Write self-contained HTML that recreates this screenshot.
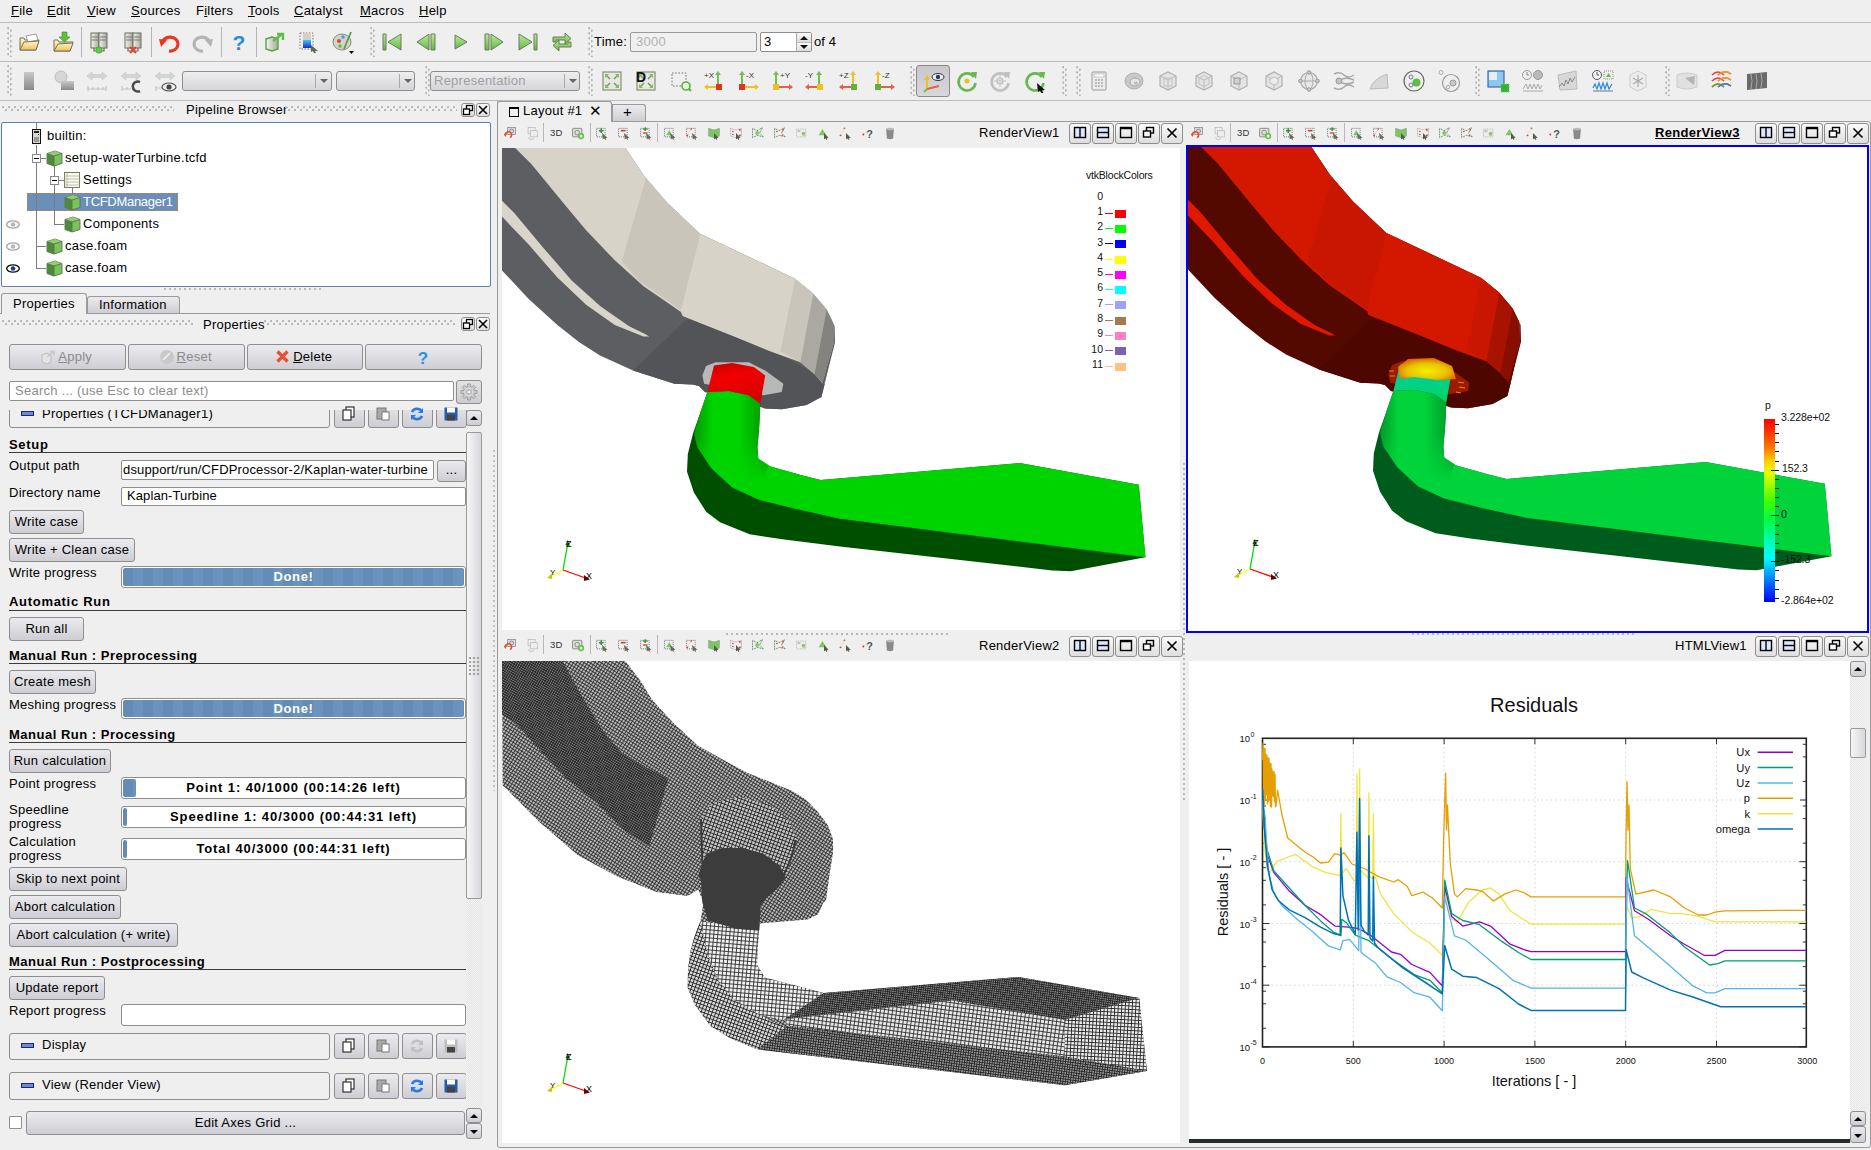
<!DOCTYPE html>
<html><head><meta charset="utf-8"><title>ParaView</title>
<style>
*{margin:0;padding:0;box-sizing:border-box}
html,body{width:1871px;height:1150px;overflow:hidden;background:#efefef;font-family:"Liberation Sans",sans-serif;font-size:13px;color:#000;position:relative}
.a{position:absolute}
.t{position:absolute;font-size:13px;line-height:15px;white-space:nowrap;letter-spacing:0.25px}
.b{font-weight:bold}
.hl{position:absolute;height:1px;background:#a0a0a0}
.vl{position:absolute;width:1px;background:#a0a0a0}
.btn{position:absolute;border:1px solid #8e8e8e;border-radius:3px;background:linear-gradient(#ebebef,#cdcdd3);}
.btnt{position:absolute;border:1px solid #8e8e8e;border-radius:3px;background:linear-gradient(#ebebef,#cdcdd3);text-align:center;font-size:13px;line-height:21px;white-space:nowrap;letter-spacing:0.25px}
.inp{position:absolute;border:1px solid #8e8e8e;border-radius:2px;background:#fff}
.grip{position:absolute;width:4px;background-image:radial-gradient(circle,#b9b9b9 0.8px,transparent 1px);background-size:3px 3px}
.griph{position:absolute;height:6px;background-image:radial-gradient(circle at 1.2px 1.2px,#b4b4b4 0.9px,transparent 1.2px),radial-gradient(circle at 4.2px 4.2px,#b4b4b4 0.9px,transparent 1.2px);background-size:6px 6px}
.prog{position:absolute;border:1px solid #8e8e8e;border-radius:3px;background:#fff;overflow:hidden}
.vbtn{position:absolute;width:22px;height:21px;border:1px solid #8e8e8e;border-radius:3px;background:linear-gradient(#fafafa,#dedede)}
.fill{position:absolute;left:1px;top:1px;bottom:1px;border-radius:2px;background:repeating-linear-gradient(90deg,#648bb4 0 10px,#6a93bd 10px 20px)}
.pt{position:absolute;left:0;right:0;top:2px;text-align:center;font-weight:bold;font-size:13px;line-height:15px;white-space:nowrap}
.sec{position:absolute;border:1px solid #8e8e8e;border-radius:3px;background:#efefef}
.sbtn{position:absolute;border:1px solid #8e8e8e;border-radius:3px;background:linear-gradient(#ebebef,#cdcdd3);width:31px}
.mini{position:absolute;width:13px;height:5px;background:#6f86d6;border:1px solid #1c2a70}

</style></head><body>
<!-- menu -->
<div class="t" style="left:11px;top:3px"><u>F</u>ile</div>
<div class="t" style="left:47px;top:3px"><u>E</u>dit</div>
<div class="t" style="left:87px;top:3px"><u>V</u>iew</div>
<div class="t" style="left:131px;top:3px"><u>S</u>ources</div>
<div class="t" style="left:196px;top:3px">F<u>i</u>lters</div>
<div class="t" style="left:248px;top:3px"><u>T</u>ools</div>
<div class="t" style="left:294px;top:3px"><u>C</u>atalyst</div>
<div class="t" style="left:360px;top:3px"><u>M</u>acros</div>
<div class="t" style="left:419px;top:3px"><u>H</u>elp</div>
<div class="hl" style="left:0;top:22px;width:1871px;background:#bdbdbd"></div>
<div class="hl" style="left:0;top:61px;width:1871px;background:#bdbdbd"></div>
<div class="hl" style="left:0;top:100px;width:1871px;background:#bdbdbd"></div>
<!-- pipeline browser -->
<div class="griph" style="left:2px;top:106px;width:172px"></div>
<div class="t" style="left:186px;top:102px">Pipeline Browser</div>
<div class="griph" style="left:285px;top:106px;width:172px"></div>
<div class="vbtn" style="left:461px;top:103px;width:14px;height:14px"></div>
<div class="vbtn" style="left:476px;top:103px;width:14px;height:14px"></div>
<div class="a" style="left:1px;top:122px;width:490px;height:165px;border:1px solid #5b80aa;border-radius:2px;background:#fff"></div>
<div class="a" style="left:27px;top:193px;width:151px;height:18px;background:#6a8fb8;border:1px dotted #c08040"></div>
<div class="t" style="left:47px;top:128px">builtin:</div>
<div class="t" style="left:65px;top:150px">setup-waterTurbine.tcfd</div>
<div class="t" style="left:83px;top:172px">Settings</div>
<div class="t" style="left:83px;top:194px;color:#fff;letter-spacing:-0.3px">TCFDManager1</div>
<div class="t" style="left:83px;top:216px">Components</div>
<div class="t" style="left:65px;top:238px">case.foam</div>
<div class="t" style="left:65px;top:260px">case.foam</div>
<!-- tabs -->
<div class="hl" style="left:0;top:313px;width:490px;background:#9a9a9a"></div>
<div class="a" style="left:1px;top:293px;width:86px;height:21px;border:1px solid #9a9a9a;border-bottom:none;border-radius:3px 3px 0 0;background:#efefef"></div>
<div class="a" style="left:87px;top:296px;width:93px;height:17px;border:1px solid #9a9a9a;border-bottom:none;border-radius:3px 3px 0 0;background:linear-gradient(#ebebef,#cdcdd3)"></div>
<div class="t" style="left:13px;top:296px">Properties</div>
<div class="t" style="left:99px;top:297px">Information</div>
<div class="griph" style="left:2px;top:320px;width:192px"></div>
<div class="t" style="left:203px;top:317px">Properties</div>
<div class="griph" style="left:264px;top:320px;width:192px"></div>
<div class="vbtn" style="left:461px;top:317px;width:14px;height:14px"></div>
<div class="vbtn" style="left:476px;top:317px;width:14px;height:14px"></div>
<!-- apply etc -->
<div class="btnt" style="left:9px;top:344px;width:117px;height:26px;line-height:24px;color:#8a8a8a">&nbsp;&nbsp;&nbsp;&nbsp;<u>A</u>pply</div>
<div class="btnt" style="left:128px;top:344px;width:117px;height:26px;line-height:24px;color:#8a8a8a">&nbsp;&nbsp;&nbsp;&nbsp;<u>R</u>eset</div>
<div class="btnt" style="left:247px;top:344px;width:116px;height:26px;line-height:24px">&nbsp;&nbsp;&nbsp;&nbsp;<u>D</u>elete</div>
<div class="btnt" style="left:365px;top:344px;width:117px;height:26px;line-height:24px"></div>
<div class="inp" style="left:9px;top:381px;width:445px;height:20px"></div>
<div class="t" style="left:15px;top:383px;color:#8c8c8c">Search ... (use Esc to clear text)</div>
<div class="btn" style="left:456px;top:380px;width:26px;height:24px;background:linear-gradient(#e2e2e4,#cdcdd1)"></div>
<div class="a" style="left:164px;top:288px;width:158px;height:3px;background-image:radial-gradient(circle at 1px 1px,#bdbdbd 0.8px,transparent 1px);background-size:5px 3px"></div>
<div class="a" style="left:0;top:0;width:490px;height:1150px;clip-path:inset(410px 0 11px 0)">
<div class="sec" style="left:9px;top:398px;width:321px;height:30px"></div>
<div class="mini" style="left:21px;top:411px"></div>
<div class="t" style="left:42px;top:406px">Properties (TCFDManager1)</div>
<div class="sbtn" style="left:334px;top:398px;height:30px"></div>
<div class="sbtn" style="left:368px;top:398px;height:30px"></div>
<div class="sbtn" style="left:402px;top:398px;height:30px"></div>
<div class="sbtn" style="left:436px;top:398px;height:30px"></div>

<div class="t b" style="left:9px;top:437px;letter-spacing:0.7px">Setup</div>
<div class="hl" style="left:9px;top:452px;width:457px;background:#3c3c3c"></div>
<div class="t" style="left:9px;top:458px">Output path</div>
<div class="inp" style="left:121px;top:460px;width:313px;height:20px;overflow:hidden"><div class="t" style="left:1px;top:1px;letter-spacing:0.15px">dsupport/run/CFDProcessor-2/Kaplan-water-turbine</div></div>
<div class="btnt" style="left:437px;top:460px;width:29px;height:22px;line-height:18px">...</div>
<div class="t" style="left:9px;top:485px">Directory name</div>
<div class="inp" style="left:121px;top:487px;width:345px;height:19px"><div class="t" style="left:5px;top:0px;letter-spacing:0.1px">Kaplan-Turbine</div></div>
<div class="btnt" style="left:9px;top:510px;width:75px;height:24px">Write case</div>
<div class="btnt" style="left:9px;top:538px;width:126px;height:24px">Write + Clean case</div>
<div class="t" style="left:9px;top:565px">Write progress</div>
<div class="prog" style="left:121px;top:566px;width:345px;height:22px"><div class="fill" style="right:1px"></div><div class="pt" style="color:#fff;top:2px;letter-spacing:0.6px">Done!</div></div>

<div class="t b" style="left:9px;top:594px;letter-spacing:0.7px">Automatic Run</div>
<div class="hl" style="left:9px;top:610px;width:457px;background:#3c3c3c"></div>
<div class="btnt" style="left:9px;top:617px;width:75px;height:24px">Run all</div>

<div class="t b" style="left:9px;top:648px;letter-spacing:0.5px">Manual Run : Preprocessing</div>
<div class="hl" style="left:9px;top:663px;width:457px;background:#3c3c3c"></div>
<div class="btnt" style="left:9px;top:670px;width:87px;height:24px">Create mesh</div>
<div class="t" style="left:9px;top:697px">Meshing progress</div>
<div class="prog" style="left:121px;top:698px;width:345px;height:21px"><div class="fill" style="right:1px"></div><div class="pt" style="color:#fff;top:2px;letter-spacing:0.6px">Done!</div></div>

<div class="t b" style="left:9px;top:727px;letter-spacing:0.5px">Manual Run : Processing</div>
<div class="hl" style="left:9px;top:742px;width:457px;background:#3c3c3c"></div>
<div class="btnt" style="left:9px;top:749px;width:102px;height:24px">Run calculation</div>
<div class="t" style="left:9px;top:776px">Point progress</div>
<div class="prog" style="left:121px;top:777px;width:345px;height:22px"><div class="fill" style="width:13px"></div><div class="pt" style="top:2px;letter-spacing:0.9px">Point 1: 40/1000 (00:14:26 left)</div></div>
<div class="t" style="left:9px;top:802px">Speedline</div>
<div class="t" style="left:9px;top:816px">progress</div>
<div class="prog" style="left:121px;top:806px;width:345px;height:22px"><div class="fill" style="width:4px"></div><div class="pt" style="top:2px;letter-spacing:0.9px">Speedline 1: 40/3000 (00:44:31 left)</div></div>
<div class="t" style="left:9px;top:834px">Calculation</div>
<div class="t" style="left:9px;top:848px">progress</div>
<div class="prog" style="left:121px;top:838px;width:345px;height:22px"><div class="fill" style="width:4px"></div><div class="pt" style="top:2px;letter-spacing:0.9px">Total 40/3000 (00:44:31 left)</div></div>
<div class="btnt" style="left:9px;top:867px;width:118px;height:24px">Skip to next point</div>
<div class="btnt" style="left:9px;top:895px;width:112px;height:24px">Abort calculation</div>
<div class="btnt" style="left:9px;top:923px;width:169px;height:24px">Abort calculation (+ write)</div>

<div class="t b" style="left:9px;top:954px;letter-spacing:0.5px">Manual Run : Postprocessing</div>
<div class="hl" style="left:9px;top:969px;width:457px;background:#3c3c3c"></div>
<div class="btnt" style="left:9px;top:976px;width:96px;height:24px">Update report</div>
<div class="t" style="left:9px;top:1003px">Report progress</div>
<div class="prog" style="left:121px;top:1004px;width:345px;height:22px"></div>

<div class="sec" style="left:9px;top:1033px;width:321px;height:27px"></div>
<div class="mini" style="left:21px;top:1043px"></div>
<div class="t" style="left:42px;top:1037px">Display</div>
<div class="sbtn" style="left:334px;top:1033px;height:26px"></div>
<div class="sbtn" style="left:368px;top:1033px;height:26px"></div>
<div class="sbtn" style="left:402px;top:1033px;height:26px"></div>
<div class="sbtn" style="left:436px;top:1033px;height:26px"></div>

<div class="sec" style="left:9px;top:1072px;width:321px;height:28px"></div>
<div class="mini" style="left:21px;top:1083px"></div>
<div class="t" style="left:42px;top:1077px">View (Render View)</div>
<div class="sbtn" style="left:334px;top:1073px;height:26px"></div>
<div class="sbtn" style="left:368px;top:1073px;height:26px"></div>
<div class="sbtn" style="left:402px;top:1073px;height:26px"></div>
<div class="sbtn" style="left:436px;top:1073px;height:26px"></div>

<div class="a" style="left:9px;top:1116px;width:13px;height:13px;border:1px solid #8e8e8e;background:#fff;border-radius:1px"></div>
<div class="btnt" style="left:26px;top:1111px;width:439px;height:24px">Edit Axes Grid ...</div>
</div>
<!-- scrollbar -->
<div class="a" style="left:466px;top:426px;width:16px;height:682px;background:repeating-conic-gradient(#e4e4e4 0 25%,#f4f4f4 0 50%) 0 0/2px 2px"></div>
<div class="a" style="left:466px;top:432px;width:16px;height:467px;border:1px solid #9a9a9a;border-radius:2px;background:linear-gradient(90deg,#f6f6f6,#d8d8dc)"></div>
<div class="btn" style="left:466px;top:410px;width:16px;height:16px"></div>
<div class="btn" style="left:466px;top:1108px;width:16px;height:15px"></div>
<div class="btn" style="left:466px;top:1123px;width:16px;height:16px"></div>
<div class="vl" style="left:497px;top:101px;height:1046px;background:#b0b0b0"></div>
<div class="a" style="left:493px;top:450px;width:3px;height:341px;background-image:radial-gradient(circle at 1px 1px,#c0c0c0 0.7px,transparent 1px);background-size:3px 5px"></div>
<div class="a" style="left:469px;top:657px;width:11px;height:18px;background-image:radial-gradient(circle at 1px 1px,#a0a0a0 0.8px,transparent 1px);background-size:4px 4px"></div>
<!-- tab widget -->
<div class="a" style="left:497px;top:121px;width:1374px;height:1027px;border:1px solid #9a9a9a;border-radius:0 3px 3px 3px;background:#efefef"></div>
<div class="a" style="left:497px;top:101px;width:115px;height:21px;border:1px solid #9a9a9a;border-bottom:none;border-radius:3px 3px 0 0;background:#efefef"></div>
<div class="a" style="left:612px;top:104px;width:34px;height:17px;border:1px solid #9a9a9a;border-bottom:none;border-radius:0 3px 0 0;background:linear-gradient(#ebebef,#cdcdd3)"></div>
<div class="a" style="left:509px;top:107px;width:10px;height:10px;border:1.5px solid #000;border-top-width:2.5px"></div>
<div class="t" style="left:523px;top:103px">Layout #1</div>
<div class="t" style="left:589px;top:103px;font-size:15px">&#x2715;</div>
<div class="t" style="left:623px;top:104px;font-size:15px">+</div>
<!-- view labels -->
<div class="t" style="left:979px;top:125px">RenderView1</div>
<div class="t b" style="left:1655px;top:125px;text-decoration:underline;letter-spacing:0.3px">RenderView3</div>
<div class="t" style="left:979px;top:638px">RenderView2</div>
<div class="t" style="left:1675px;top:638px">HTMLView1</div>
<!-- view contents -->
<div class="a" style="left:502px;top:148px;width:678px;height:482px;background:#fff;overflow:hidden" id="rv1"></div>
<div class="a" style="left:1186px;top:145px;width:683px;height:488px;border:2px solid #0000ff;background:#fff"></div>
<div class="a" style="left:502px;top:661px;width:678px;height:482px;background:#fff"></div>
<div class="a" style="left:1189px;top:661px;width:661px;height:482px;background:#fff"></div>
<div class="a" style="left:1189px;top:1139px;width:661px;height:4px;background:#252e2c"></div>
<!-- html scrollbar -->
<div class="a" style="left:1850px;top:661px;width:16px;height:482px;background:repeating-conic-gradient(#e4e4e4 0 25%,#f6f6f6 0 50%) 0 0/2px 2px"></div>
<div class="btn" style="left:1850px;top:661px;width:16px;height:16px"></div>
<div class="a" style="left:1850px;top:728px;width:16px;height:30px;border:1px solid #9a9a9a;border-radius:2px;background:linear-gradient(90deg,#f6f6f6,#d8d8dc)"></div>
<div class="btn" style="left:1850px;top:1111px;width:16px;height:15px"></div>
<div class="btn" style="left:1850px;top:1126px;width:16px;height:17px"></div>
<div class="vbtn" style="left:1069px;top:123px"></div>
<div class="vbtn" style="left:1092px;top:123px"></div>
<div class="vbtn" style="left:1115px;top:123px"></div>
<div class="vbtn" style="left:1138px;top:123px"></div>
<div class="vbtn" style="left:1161px;top:123px"></div>
<div class="vbtn" style="left:1755px;top:123px"></div>
<div class="vbtn" style="left:1778px;top:123px"></div>
<div class="vbtn" style="left:1801px;top:123px"></div>
<div class="vbtn" style="left:1824px;top:123px"></div>
<div class="vbtn" style="left:1847px;top:123px"></div>
<div class="vbtn" style="left:1069px;top:636px"></div>
<div class="vbtn" style="left:1092px;top:636px"></div>
<div class="vbtn" style="left:1115px;top:636px"></div>
<div class="vbtn" style="left:1138px;top:636px"></div>
<div class="vbtn" style="left:1161px;top:636px"></div>
<div class="vbtn" style="left:1755px;top:636px"></div>
<div class="vbtn" style="left:1778px;top:636px"></div>
<div class="vbtn" style="left:1801px;top:636px"></div>
<div class="vbtn" style="left:1824px;top:636px"></div>
<div class="vbtn" style="left:1847px;top:636px"></div><svg class="a" style="left:502px;top:148px" width="678" height="482" viewBox="502 148 678 482"><defs><linearGradient id="redg" x1="0" y1="0" x2="0.3" y2="1"><stop offset="0" stop-color="#c00000"/><stop offset="0.4" stop-color="#f20000"/><stop offset="1" stop-color="#d80000"/></linearGradient></defs><g transform="translate(0,0)"><polygon points="502.0,147.6 625.2,147.6 644.3,176.3 667.0,202.4 700.0,233.7 795.0,278.7 813.2,293.6 826.4,309.3 833.0,322.5 833.8,342.4 824.7,383.7 821.4,396.9 806.5,405.1 781.8,409.3 765.2,408.5 740.0,400.0 705.0,392.0 699.0,386.0 692.5,384.5 674.4,383.7 633.0,370.4 600.0,355.6 578.9,342.1 557.4,325.0 528.7,299.1 502.0,270.4" fill="#5c5e62"/><polygon points="686.0,320.0 692.5,320.0 732.2,335.7 781.8,355.6 814.8,373.8 821.4,383.7 824.7,383.7 821.4,396.9 806.5,405.1 781.8,409.3 765.2,408.5 740.0,400.0 705.0,392.0 699.0,386.0 692.5,384.5 674.4,383.7 633.0,370.4" fill="#525458"/><polygon points="514.8,147.6 625.2,147.6 644.3,176.3 667.0,202.4 700.0,233.7 795.0,278.7 813.2,293.6 826.4,309.3 833.0,322.5 833.8,342.4 824.7,383.7 822.4,383.0 814.4,373.9 800.4,362.3 770.0,351.3 732.2,335.7 692.5,320.0 682.6,315.9 680.9,312.0 660.0,297.6 643.5,286.2 614.8,260.3 586.1,230.2 564.6,204.4 544.5,180.0 531.3,164.1" fill="#d7d3c9"/><polygon points="646.0,178.0 667.0,202.4 700.0,233.7 700.0,235.4 680.9,310.2 639.1,280.7 621.7,261.5" fill="#c9c5bb"/><polygon points="795.0,278.9 813.2,294.1 800.4,362.3 780.4,351.3" fill="#c9c5bb"/><polygon points="813.2,294.1 826.6,309.3 814.4,373.9 800.4,362.3" fill="#aaa8a0"/><polygon points="826.6,309.3 833.3,323.3 833.9,342.8 822.4,383.0 814.4,373.9" fill="#84837f"/><polygon points="833.3,323.3 834.6,326.0 835.0,342.8 824.2,384.5 822.4,383.0 833.9,342.8" fill="#5c5c5a"/><polygon points="502.0,200.8 514.3,213.0 543.0,247.4 571.7,280.4 600.4,306.3 629.1,326.3 645.0,334.0 649.2,336.4 643.5,336.4 614.8,324.9 586.1,304.8 557.4,277.6 528.7,244.6 502.0,216.6" fill="#d9d5cb"/><polygon points="702.4,375.4 706.0,366.0 715.7,362.2 748.7,362.2 765.2,370.5 783.4,383.7 781.8,391.9 763.6,395.2 704.1,383.7" fill="#b8b8b8"/><polygon points="707.4,392.0 700.9,410.9 693.0,433.5 687.8,454.3 687.0,471.7 693.9,492.6 706.1,511.7 720.0,522.2 749.6,534.3 784.3,539.6 840.0,546.5 1052.4,570.4 1070.7,571.2 1145.4,557.3 1138.8,484.7 1019.7,463.0 820.6,480.0 801.7,475.2 770.4,466.5 758.3,458.7 757.4,447.4 759.1,428.3 760.3,403.5 748.7,395.2 728.9,391.1" fill="#004e00"/><polygon points="707.4,392.0 700.9,410.9 694.0,433.5 697.4,447.4 711.3,468.3 732.2,487.4 758.3,499.6 793.0,508.3 840.0,518.7 1145.4,557.3 1138.8,484.7 1019.7,463.0 820.6,480.0 801.7,475.2 770.4,466.5 758.3,458.7 757.4,447.4 759.1,428.3 760.3,403.5 748.7,395.2 728.9,391.1" fill="#00d400"/><defs><linearGradient id="tsh0" x1="0" y1="0" x2="1" y2="0"><stop offset="0" stop-color="#000" stop-opacity="0.28"/><stop offset="0.25" stop-color="#000" stop-opacity="0"/><stop offset="0.6" stop-color="#000" stop-opacity="0"/><stop offset="0.88" stop-color="#000" stop-opacity="0.22"/><stop offset="1" stop-color="#000" stop-opacity="0.4"/></linearGradient><linearGradient id="tmg0" gradientUnits="userSpaceOnUse" x1="0" y1="435" x2="0" y2="482"><stop offset="0" stop-color="#fff"/><stop offset="1" stop-color="#000"/></linearGradient><mask id="tmk0" maskUnits="userSpaceOnUse" x="600" y="350" width="300" height="200"><rect x="600" y="350" width="300" height="200" fill="url(#tmg0)"/></mask></defs><polygon points="707.4,392.0 700.9,410.9 694.0,433.5 697.4,447.4 711.3,468.3 732.2,487.4 758.3,499.6 768.0,466.0 758.3,458.7 757.4,447.4 759.1,428.3 760.3,403.5 748.7,395.2 728.9,391.1" fill="url(#tsh0)" mask="url(#tmk0)"/><polygon points="714.0,365.5 732.2,363.0 753.7,367.1 765.2,375.4 760.3,403.5 748.7,395.2 728.9,391.1 707.4,392.0" fill="url(#redg)"/></g></svg>
<svg class="a" style="left:1188px;top:147px" width="679" height="484" viewBox="1188 147 679 484"><g transform="translate(686,-1)"><polygon points="502.0,147.6 625.2,147.6 644.3,176.3 667.0,202.4 700.0,233.7 795.0,278.7 813.2,293.6 826.4,309.3 833.0,322.5 833.8,342.4 824.7,383.7 821.4,396.9 806.5,405.1 781.8,409.3 765.2,408.5 740.0,400.0 705.0,392.0 699.0,386.0 692.5,384.5 674.4,383.7 633.0,370.4 600.0,355.6 578.9,342.1 557.4,325.0 528.7,299.1 502.0,270.4" fill="#530800"/><polygon points="686.0,320.0 692.5,320.0 732.2,335.7 781.8,355.6 814.8,373.8 821.4,383.7 824.7,383.7 821.4,396.9 806.5,405.1 781.8,409.3 765.2,408.5 740.0,400.0 705.0,392.0 699.0,386.0 692.5,384.5 674.4,383.7 633.0,370.4" fill="#4e0700"/><polygon points="514.8,147.6 625.2,147.6 644.3,176.3 667.0,202.4 700.0,233.7 795.0,278.7 813.2,293.6 826.4,309.3 833.0,322.5 833.8,342.4 824.7,383.7 822.4,383.0 814.4,373.9 800.4,362.3 770.0,351.3 732.2,335.7 692.5,320.0 682.6,315.9 680.9,312.0 660.0,297.6 643.5,286.2 614.8,260.3 586.1,230.2 564.6,204.4 544.5,180.0 531.3,164.1" fill="#d41800"/><polygon points="646.0,178.0 667.0,202.4 700.0,233.7 700.0,235.4 680.9,310.2 639.1,280.7 621.7,261.5" fill="#c81600"/><polygon points="795.0,278.9 813.2,294.1 800.4,362.3 780.4,351.3" fill="#c81600"/><polygon points="813.2,294.1 826.6,309.3 814.4,373.9 800.4,362.3" fill="#a81200"/><polygon points="826.6,309.3 833.3,323.3 833.9,342.8 822.4,383.0 814.4,373.9" fill="#880e00"/><polygon points="833.3,323.3 834.6,326.0 835.0,342.8 824.2,384.5 822.4,383.0 833.9,342.8" fill="#5a0800"/><polygon points="502.0,200.8 514.3,213.0 543.0,247.4 571.7,280.4 600.4,306.3 629.1,326.3 645.0,334.0 649.2,336.4 643.5,336.4 614.8,324.9 586.1,304.8 557.4,277.6 528.7,244.6 502.0,216.6" fill="#e01800"/><polygon points="702.4,375.4 706.0,366.0 715.7,362.2 748.7,362.2 765.2,370.5 783.4,383.7 781.8,391.9 763.6,395.2 704.1,383.7" fill="#9a1c00"/><polygon points="707.4,392.0 700.9,410.9 693.0,433.5 687.8,454.3 687.0,471.7 693.9,492.6 706.1,511.7 720.0,522.2 749.6,534.3 784.3,539.6 840.0,546.5 1052.4,570.4 1070.7,571.2 1145.4,557.3 1138.8,484.7 1019.7,463.0 820.6,480.0 801.7,475.2 770.4,466.5 758.3,458.7 757.4,447.4 759.1,428.3 760.3,403.5 748.7,395.2 728.9,391.1" fill="#005c1c"/><polygon points="707.4,392.0 700.9,410.9 694.0,433.5 697.4,447.4 711.3,468.3 732.2,487.4 758.3,499.6 793.0,508.3 840.0,518.7 1145.4,557.3 1138.8,484.7 1019.7,463.0 820.6,480.0 801.7,475.2 770.4,466.5 758.3,458.7 757.4,447.4 759.1,428.3 760.3,403.5 748.7,395.2 728.9,391.1" fill="#00d43a"/><defs><linearGradient id="tsh686" x1="0" y1="0" x2="1" y2="0"><stop offset="0" stop-color="#000" stop-opacity="0.28"/><stop offset="0.25" stop-color="#000" stop-opacity="0"/><stop offset="0.6" stop-color="#000" stop-opacity="0"/><stop offset="0.88" stop-color="#000" stop-opacity="0.22"/><stop offset="1" stop-color="#000" stop-opacity="0.4"/></linearGradient><linearGradient id="tmg686" gradientUnits="userSpaceOnUse" x1="0" y1="435" x2="0" y2="482"><stop offset="0" stop-color="#fff"/><stop offset="1" stop-color="#000"/></linearGradient><mask id="tmk686" maskUnits="userSpaceOnUse" x="600" y="350" width="300" height="200"><rect x="600" y="350" width="300" height="200" fill="url(#tmg686)"/></mask></defs><polygon points="707.4,392.0 700.9,410.9 694.0,433.5 697.4,447.4 711.3,468.3 732.2,487.4 758.3,499.6 768.0,466.0 758.3,458.7 757.4,447.4 759.1,428.3 760.3,403.5 748.7,395.2 728.9,391.1" fill="url(#tsh686)" mask="url(#tmk686)"/><polygon points="714.0,365.5 732.2,363.0 753.7,367.1 765.2,375.4 760.3,403.5 748.7,395.2 728.9,391.1 707.4,392.0" fill="url(#cyg)"/><defs><radialGradient id="yel" cx="0.5" cy="0.6" r="0.6"><stop offset="0" stop-color="#f4f000"/><stop offset="0.6" stop-color="#e8c000"/><stop offset="1" stop-color="#e06000"/></radialGradient><linearGradient id="cyg" x1="0" y1="0" x2="0" y2="1"><stop offset="0" stop-color="#00c8b0"/><stop offset="1" stop-color="#00d860"/></linearGradient></defs><polygon points="712,368 722,360 748,359 766,367 770,380 752,381 728,378 714,380" fill="url(#yel)"/><path d="M703 372 l5 0 M704 377 l5 0 M772 383 l6 1 M773 388 l6 1 M770 393 l5 1" stroke="#f08020" stroke-width="1.2"/></g></svg>
<svg class="a" style="left:502px;top:661px" width="678" height="482" viewBox="502 661 678 482"><defs><pattern id="pm_medium" patternUnits="userSpaceOnUse" width="3" height="3" patternTransform="rotate(32)"><rect width="3" height="3" fill="#bdbdbd"/><path d="M0 0.45 H3 M0.45 0 V3" stroke="#262626" stroke-width="0.9"/></pattern><pattern id="pm_dband" patternUnits="userSpaceOnUse" width="2.2" height="2.2" patternTransform="rotate(32)"><rect width="2.2" height="2.2" fill="#868686"/><path d="M0 0.45 H2.2 M0.45 0 V2.2" stroke="#262626" stroke-width="0.9"/></pattern><pattern id="pm_tubeL" patternUnits="userSpaceOnUse" width="4" height="4" patternTransform="rotate(5)"><rect width="4" height="4" fill="#f0f0f0"/><path d="M0 0.45 H4 M0.45 0 V4" stroke="#262626" stroke-width="0.9"/></pattern><pattern id="pm_tubeout" patternUnits="userSpaceOnUse" width="3.5" height="3.5" patternTransform="rotate(20)"><rect width="3.5" height="3.5" fill="#d8d8d8"/><path d="M0 0.45 H3.5 M0.45 0 V3.5" stroke="#262626" stroke-width="0.9"/></pattern><pattern id="pm_light" patternUnits="userSpaceOnUse" width="4" height="4" patternTransform="rotate(8)"><rect width="4" height="4" fill="#e7e7e7"/><path d="M0 0.45 H4 M0.45 0 V4" stroke="#262626" stroke-width="0.9"/></pattern><pattern id="pm_top" patternUnits="userSpaceOnUse" width="2.2" height="2.2" patternTransform="rotate(8)"><rect width="2.2" height="2.2" fill="#8e8e8e"/><path d="M0 0.45 H2.2 M0.45 0 V2.2" stroke="#262626" stroke-width="0.9"/></pattern><pattern id="pm_bot" patternUnits="userSpaceOnUse" width="2.5" height="2.5" patternTransform="rotate(8)"><rect width="2.5" height="2.5" fill="#999999"/><path d="M0 0.45 H2.5 M0.45 0 V2.5" stroke="#262626" stroke-width="0.9"/></pattern><pattern id="pm_end" patternUnits="userSpaceOnUse" width="3.5" height="3.5" patternTransform="rotate(3)"><rect width="3.5" height="3.5" fill="#ebebeb"/><path d="M0 0.45 H3.5 M0.45 0 V3.5" stroke="#262626" stroke-width="0.9"/></pattern><pattern id="pm_dome" patternUnits="userSpaceOnUse" width="3.5" height="3.5" patternTransform="rotate(20)"><rect width="3.5" height="3.5" fill="#c4c4c4"/><path d="M0 0.45 H3.5 M0.45 0 V3.5" stroke="#262626" stroke-width="0.9"/></pattern></defs><polygon points="502.0,661.0 625.2,661.0 640.0,680.0 652.2,700.0 673.0,722.6 697.4,745.2 721.7,759.1 747.8,773.0 773.9,783.5 791.3,790.4 805.2,799.1 817.4,811.3 827.8,825.2 833.0,839.1 833.0,853.0 829.6,873.9 826.1,900.0 823.4,902.6 818.2,914.3 807.8,919.5 760.8,923.4 759.5,923.6 758.0,945.0 757.0,964.7 764.7,977.5 823.7,992.9 1018.6,977.0 1139.2,998.0 1146.9,1071.1 1064.8,1085.2 757.0,1049.3 730.0,1038.0 710.8,1026.2 695.0,1005.0 687.7,987.7 688.0,970.0 690.3,951.8 695.0,935.0 700.5,921.0 703.4,902.6 698.2,889.5 687.8,896.0 656.5,892.1 617.4,876.5 578.2,855.6 539.1,821.7 502.6,785.2" fill="url(#pm_medium)"/><polygon points="502.0,661.0 562.6,661.0 578.3,690.0 591.6,712.2 603.4,731.4 621.2,752.1 647.8,768.3 668.5,777.9 649.3,846.6 625.6,831.9 596.0,802.3 566.5,778.7 541.4,752.1 519.2,726.9 502.0,714.4" fill="url(#pm_dband)"/><polygon points="701.0,820.0 712.0,803.0 740.0,797.0 770.0,805.0 790.0,822.0 797.0,840.0 785.7,877.4 780.1,866.2 763.4,853.7 742.6,848.1 721.7,848.1 706.4,853.7 702.0,862.0" fill="url(#pm_dome)"/><path d="M701 819 L702.3 863 M795.4 839.8 Q792 860 782.9 876" fill="none" stroke="#3a3a3a" stroke-width="2"/><polygon points="700.5,921.0 708.0,955.0 718.0,980.0 735.0,1000.0 760.0,1015.0 787.7,1028.8 757.0,1049.3 730.0,1038.0 710.8,1026.2 695.0,1005.0 687.7,987.7 688.0,970.0 690.3,951.8 695.0,935.0" fill="url(#pm_tubeout)"/><polygon points="700.5,921.0 712.3,923.0 758.7,928.3 758.0,945.0 757.0,964.7 764.7,977.5 823.7,992.9 787.7,1021.1 760.0,1015.0 735.0,1000.0 718.0,980.0 708.0,955.0" fill="url(#pm_tubeL)"/><polygon points="823.7,992.9 1018.6,977.0 1139.2,998.0 1064.8,1020.0 952.0,1000.5 784.0,1019.5" fill="url(#pm_top)"/><polygon points="784.0,1019.5 952.0,1000.5 1064.8,1020.0 1064.8,1056.5 787.7,1025.7" fill="url(#pm_light)"/><polygon points="1064.8,1020.0 1139.2,998.0 1146.9,1071.1 1064.8,1056.5" fill="url(#pm_end)"/><polygon points="757.0,1049.3 787.7,1025.7 1064.8,1056.5 1146.9,1071.1 1064.8,1085.2" fill="url(#pm_bot)"/><polygon points="706.4,853.7 721.7,848.1 742.6,848.1 763.4,853.7 780.1,866.2 785.7,877.4 777.4,888.5 766.2,898.2 760.7,905.2 759.3,930.2 735.6,928.8 707.8,920.5 702.3,902.4 700.9,880.1 698.1,876.0 700.9,867.6" fill="#3c3c3c"/></svg><div class="a" style="left:1086px;top:169px;font-size:10.5px;line-height:13px;white-space:nowrap;color:#111;letter-spacing:-0.2px">vtkBlockColors</div>
<div class="a" style="left:1080px;top:189.8px;width:23px;text-align:right;font-size:10.5px;line-height:13px;color:#111">0</div>
<div class="a" style="left:1080px;top:205.1px;width:23px;text-align:right;font-size:10.5px;line-height:13px;color:#111">1</div>
<div class="a" style="left:1105px;top:212.8px;width:8px;height:1px;background:#ff0000"></div>
<div class="a" style="left:1115px;top:209.8px;width:11px;height:8px;background:#ff0000"></div>
<div class="a" style="left:1080px;top:220.3px;width:23px;text-align:right;font-size:10.5px;line-height:13px;color:#111">2</div>
<div class="a" style="left:1105px;top:228.0px;width:8px;height:1px;background:#00ff00"></div>
<div class="a" style="left:1115px;top:225.0px;width:11px;height:8px;background:#00ff00"></div>
<div class="a" style="left:1080px;top:235.6px;width:23px;text-align:right;font-size:10.5px;line-height:13px;color:#111">3</div>
<div class="a" style="left:1105px;top:243.3px;width:8px;height:1px;background:#0000ff"></div>
<div class="a" style="left:1115px;top:240.3px;width:11px;height:8px;background:#0000ff"></div>
<div class="a" style="left:1080px;top:250.9px;width:23px;text-align:right;font-size:10.5px;line-height:13px;color:#111">4</div>
<div class="a" style="left:1105px;top:258.6px;width:8px;height:1px;background:#ffff00"></div>
<div class="a" style="left:1115px;top:255.6px;width:11px;height:8px;background:#ffff00"></div>
<div class="a" style="left:1080px;top:266.1px;width:23px;text-align:right;font-size:10.5px;line-height:13px;color:#111">5</div>
<div class="a" style="left:1105px;top:273.8px;width:8px;height:1px;background:#ff00ff"></div>
<div class="a" style="left:1115px;top:270.8px;width:11px;height:8px;background:#ff00ff"></div>
<div class="a" style="left:1080px;top:281.4px;width:23px;text-align:right;font-size:10.5px;line-height:13px;color:#111">6</div>
<div class="a" style="left:1105px;top:289.1px;width:8px;height:1px;background:#00ffff"></div>
<div class="a" style="left:1115px;top:286.1px;width:11px;height:8px;background:#00ffff"></div>
<div class="a" style="left:1080px;top:296.7px;width:23px;text-align:right;font-size:10.5px;line-height:13px;color:#111">7</div>
<div class="a" style="left:1105px;top:304.4px;width:8px;height:1px;background:#a0a0ff"></div>
<div class="a" style="left:1115px;top:301.4px;width:11px;height:8px;background:#a0a0ff"></div>
<div class="a" style="left:1080px;top:312.0px;width:23px;text-align:right;font-size:10.5px;line-height:13px;color:#111">8</div>
<div class="a" style="left:1105px;top:319.7px;width:8px;height:1px;background:#a57850"></div>
<div class="a" style="left:1115px;top:316.7px;width:11px;height:8px;background:#a57850"></div>
<div class="a" style="left:1080px;top:327.2px;width:23px;text-align:right;font-size:10.5px;line-height:13px;color:#111">9</div>
<div class="a" style="left:1105px;top:334.9px;width:8px;height:1px;background:#ff80c0"></div>
<div class="a" style="left:1115px;top:331.9px;width:11px;height:8px;background:#ff80c0"></div>
<div class="a" style="left:1080px;top:342.5px;width:23px;text-align:right;font-size:10.5px;line-height:13px;color:#111">10</div>
<div class="a" style="left:1105px;top:350.2px;width:8px;height:1px;background:#8060b0"></div>
<div class="a" style="left:1115px;top:347.2px;width:11px;height:8px;background:#8060b0"></div>
<div class="a" style="left:1080px;top:357.8px;width:23px;text-align:right;font-size:10.5px;line-height:13px;color:#111">11</div>
<div class="a" style="left:1105px;top:365.5px;width:8px;height:1px;background:#ffc080"></div>
<div class="a" style="left:1115px;top:362.5px;width:11px;height:8px;background:#ffc080"></div>
<div class="a" style="left:1764px;top:419px;width:11px;height:183px;background:linear-gradient(#ff0000 0%,#ff7a00 16%,#ffd800 24%,#e0ff00 30%,#40ff00 45%,#00ff40 55%,#00ffb0 66%,#00ffff 76%,#0090ff 86%,#0000ff 100%)"></div>
<div class="a" style="left:1775px;top:424.1px;width:4px;height:1.2px;background:#111"></div>
<div class="a" style="left:1775px;top:432.7px;width:4px;height:1.2px;background:#111"></div>
<div class="a" style="left:1775px;top:441.7px;width:4px;height:1.2px;background:#111"></div>
<div class="a" style="left:1775px;top:450.9px;width:4px;height:1.2px;background:#111"></div>
<div class="a" style="left:1775px;top:460.5px;width:4px;height:1.2px;background:#111"></div>
<div class="a" style="left:1771px;top:469.6px;width:8px;height:1.2px;background:#111"></div>
<div class="a" style="left:1775px;top:478.6px;width:4px;height:1.2px;background:#111"></div>
<div class="a" style="left:1775px;top:487.8px;width:4px;height:1.2px;background:#111"></div>
<div class="a" style="left:1775px;top:496.8px;width:4px;height:1.2px;background:#111"></div>
<div class="a" style="left:1775px;top:505.8px;width:4px;height:1.2px;background:#111"></div>
<div class="a" style="left:1771px;top:514.6px;width:8px;height:1.2px;background:#111"></div>
<div class="a" style="left:1775px;top:524.5px;width:4px;height:1.2px;background:#111"></div>
<div class="a" style="left:1775px;top:533.5px;width:4px;height:1.2px;background:#111"></div>
<div class="a" style="left:1775px;top:542.7px;width:4px;height:1.2px;background:#111"></div>
<div class="a" style="left:1775px;top:551.7px;width:4px;height:1.2px;background:#111"></div>
<div class="a" style="left:1771px;top:560.8px;width:8px;height:1.2px;background:#111"></div>
<div class="a" style="left:1775px;top:569.8px;width:4px;height:1.2px;background:#111"></div>
<div class="a" style="left:1775px;top:579.6px;width:4px;height:1.2px;background:#111"></div>
<div class="a" style="left:1775px;top:588.6px;width:4px;height:1.2px;background:#111"></div>
<div class="a" style="left:1775px;top:597.5px;width:4px;height:1.2px;background:#111"></div>
<div class="a" style="left:1765px;top:398.5px;font-size:10.5px;line-height:13px;white-space:nowrap;color:#111;letter-spacing:-0.1px">p</div>
<div class="a" style="left:1781px;top:410.6px;font-size:10.5px;line-height:13px;white-space:nowrap;color:#111;letter-spacing:-0.1px">3.228e+02</div>
<div class="a" style="left:1782px;top:461.6px;font-size:10.5px;line-height:13px;white-space:nowrap;color:#111;letter-spacing:-0.1px">152.3</div>
<div class="a" style="left:1781px;top:507.5px;font-size:10.5px;line-height:13px;white-space:nowrap;color:#111;letter-spacing:-0.1px">0</div>
<div class="a" style="left:1781px;top:553.4px;font-size:10.5px;line-height:13px;white-space:nowrap;color:#111;letter-spacing:-0.1px">-152.3</div>
<div class="a" style="left:1781px;top:593.5px;font-size:10.5px;line-height:13px;white-space:nowrap;color:#111;letter-spacing:-0.1px">-2.864e+02</div>
<svg class="a" style="left:538px;top:535px" width="60" height="50" viewBox="538 535 60 50"><line x1="563" y1="570" x2="567.7" y2="544" stroke="#00dd00" stroke-width="1.3"/><polygon points="565.5,545 567.7,540 570,546" fill="#006000"/><line x1="563" y1="570" x2="587" y2="578.5" stroke="#ff0000" stroke-width="1.3"/><polygon points="584,575 590,579.5 584,581" fill="#700000"/><line x1="563" y1="570" x2="551" y2="576.5" stroke="#ffff00" stroke-width="1.3"/><polygon points="552,573.5 547,578 552,579" fill="#c8c800"/><text x="566" y="547" font-size="9" font-family="Liberation Sans" fill="#000">Z</text><text x="586" y="579" font-size="9" font-family="Liberation Sans" fill="#000">X</text><text x="550" y="575" font-size="8" font-family="Liberation Sans" fill="#000">Y</text></svg>
<svg class="a" style="left:1225px;top:534px" width="60" height="50" viewBox="1225 534 60 50"><line x1="1250" y1="569" x2="1254.7" y2="543" stroke="#00dd00" stroke-width="1.3"/><polygon points="1252.5,544 1254.7,539 1257,545" fill="#006000"/><line x1="1250" y1="569" x2="1274" y2="577.5" stroke="#ff0000" stroke-width="1.3"/><polygon points="1271,574 1277,578.5 1271,580" fill="#700000"/><line x1="1250" y1="569" x2="1238" y2="575.5" stroke="#ffff00" stroke-width="1.3"/><polygon points="1239,572.5 1234,577 1239,578" fill="#c8c800"/><text x="1253" y="546" font-size="9" font-family="Liberation Sans" fill="#000">Z</text><text x="1273" y="578" font-size="9" font-family="Liberation Sans" fill="#000">X</text><text x="1237" y="574" font-size="8" font-family="Liberation Sans" fill="#000">Y</text></svg>
<svg class="a" style="left:538px;top:1048px" width="60" height="50" viewBox="538 1048 60 50"><line x1="563" y1="1083" x2="567.7" y2="1057" stroke="#00dd00" stroke-width="1.3"/><polygon points="565.5,1058 567.7,1053 570,1059" fill="#006000"/><line x1="563" y1="1083" x2="587" y2="1091.5" stroke="#ff0000" stroke-width="1.3"/><polygon points="584,1088 590,1092.5 584,1094" fill="#700000"/><line x1="563" y1="1083" x2="551" y2="1089.5" stroke="#ffff00" stroke-width="1.3"/><polygon points="552,1086.5 547,1091 552,1092" fill="#c8c800"/><text x="566" y="1060" font-size="9" font-family="Liberation Sans" fill="#000">Z</text><text x="586" y="1092" font-size="9" font-family="Liberation Sans" fill="#000">X</text><text x="550" y="1088" font-size="8" font-family="Liberation Sans" fill="#000">Y</text></svg><svg class="a" style="left:1189px;top:661px" width="661" height="478" viewBox="1189 661 661 478">
<line x1="1353.3" y1="738.3" x2="1353.3" y2="1046.9" stroke="#c8c8c8" stroke-width="0.8" stroke-dasharray="1.5,3"/>
<line x1="1444.1" y1="738.3" x2="1444.1" y2="1046.9" stroke="#c8c8c8" stroke-width="0.8" stroke-dasharray="1.5,3"/>
<line x1="1534.9" y1="738.3" x2="1534.9" y2="1046.9" stroke="#c8c8c8" stroke-width="0.8" stroke-dasharray="1.5,3"/>
<line x1="1625.7" y1="738.3" x2="1625.7" y2="1046.9" stroke="#c8c8c8" stroke-width="0.8" stroke-dasharray="1.5,3"/>
<line x1="1716.5" y1="738.3" x2="1716.5" y2="1046.9" stroke="#c8c8c8" stroke-width="0.8" stroke-dasharray="1.5,3"/>
<line x1="1262.5" y1="800.0" x2="1806.3" y2="800.0" stroke="#c8c8c8" stroke-width="0.8" stroke-dasharray="1.5,3"/>
<line x1="1262.5" y1="861.7" x2="1806.3" y2="861.7" stroke="#c8c8c8" stroke-width="0.8" stroke-dasharray="1.5,3"/>
<line x1="1262.5" y1="923.5" x2="1806.3" y2="923.5" stroke="#c8c8c8" stroke-width="0.8" stroke-dasharray="1.5,3"/>
<line x1="1262.5" y1="985.2" x2="1806.3" y2="985.2" stroke="#c8c8c8" stroke-width="0.8" stroke-dasharray="1.5,3"/>
<line x1="1353.3" y1="1046.9" x2="1353.3" y2="1040.9" stroke="#333" stroke-width="1"/>
<line x1="1353.3" y1="738.3" x2="1353.3" y2="744.3" stroke="#333" stroke-width="1"/>
<line x1="1444.1" y1="1046.9" x2="1444.1" y2="1040.9" stroke="#333" stroke-width="1"/>
<line x1="1444.1" y1="738.3" x2="1444.1" y2="744.3" stroke="#333" stroke-width="1"/>
<line x1="1534.9" y1="1046.9" x2="1534.9" y2="1040.9" stroke="#333" stroke-width="1"/>
<line x1="1534.9" y1="738.3" x2="1534.9" y2="744.3" stroke="#333" stroke-width="1"/>
<line x1="1625.7" y1="1046.9" x2="1625.7" y2="1040.9" stroke="#333" stroke-width="1"/>
<line x1="1625.7" y1="738.3" x2="1625.7" y2="744.3" stroke="#333" stroke-width="1"/>
<line x1="1716.5" y1="1046.9" x2="1716.5" y2="1040.9" stroke="#333" stroke-width="1"/>
<line x1="1716.5" y1="738.3" x2="1716.5" y2="744.3" stroke="#333" stroke-width="1"/>
<line x1="1262.5" y1="800.0" x2="1269.5" y2="800.0" stroke="#333" stroke-width="1"/>
<line x1="1806.3" y1="800.0" x2="1799.3" y2="800.0" stroke="#333" stroke-width="1"/>
<line x1="1262.5" y1="781.4" x2="1266.0" y2="781.4" stroke="#333" stroke-width="1"/>
<line x1="1806.3" y1="781.4" x2="1802.8" y2="781.4" stroke="#333" stroke-width="1"/>
<line x1="1262.5" y1="756.9" x2="1266.0" y2="756.9" stroke="#333" stroke-width="1"/>
<line x1="1806.3" y1="756.9" x2="1802.8" y2="756.9" stroke="#333" stroke-width="1"/>
<line x1="1262.5" y1="744.3" x2="1266.0" y2="744.3" stroke="#333" stroke-width="1"/>
<line x1="1806.3" y1="744.3" x2="1802.8" y2="744.3" stroke="#333" stroke-width="1"/>
<line x1="1262.5" y1="861.7" x2="1269.5" y2="861.7" stroke="#333" stroke-width="1"/>
<line x1="1806.3" y1="861.7" x2="1799.3" y2="861.7" stroke="#333" stroke-width="1"/>
<line x1="1262.5" y1="843.2" x2="1266.0" y2="843.2" stroke="#333" stroke-width="1"/>
<line x1="1806.3" y1="843.2" x2="1802.8" y2="843.2" stroke="#333" stroke-width="1"/>
<line x1="1262.5" y1="818.6" x2="1266.0" y2="818.6" stroke="#333" stroke-width="1"/>
<line x1="1806.3" y1="818.6" x2="1802.8" y2="818.6" stroke="#333" stroke-width="1"/>
<line x1="1262.5" y1="806.0" x2="1266.0" y2="806.0" stroke="#333" stroke-width="1"/>
<line x1="1806.3" y1="806.0" x2="1802.8" y2="806.0" stroke="#333" stroke-width="1"/>
<line x1="1262.5" y1="923.5" x2="1269.5" y2="923.5" stroke="#333" stroke-width="1"/>
<line x1="1806.3" y1="923.5" x2="1799.3" y2="923.5" stroke="#333" stroke-width="1"/>
<line x1="1262.5" y1="904.9" x2="1266.0" y2="904.9" stroke="#333" stroke-width="1"/>
<line x1="1806.3" y1="904.9" x2="1802.8" y2="904.9" stroke="#333" stroke-width="1"/>
<line x1="1262.5" y1="880.3" x2="1266.0" y2="880.3" stroke="#333" stroke-width="1"/>
<line x1="1806.3" y1="880.3" x2="1802.8" y2="880.3" stroke="#333" stroke-width="1"/>
<line x1="1262.5" y1="867.7" x2="1266.0" y2="867.7" stroke="#333" stroke-width="1"/>
<line x1="1806.3" y1="867.7" x2="1802.8" y2="867.7" stroke="#333" stroke-width="1"/>
<line x1="1262.5" y1="985.2" x2="1269.5" y2="985.2" stroke="#333" stroke-width="1"/>
<line x1="1806.3" y1="985.2" x2="1799.3" y2="985.2" stroke="#333" stroke-width="1"/>
<line x1="1262.5" y1="966.6" x2="1266.0" y2="966.6" stroke="#333" stroke-width="1"/>
<line x1="1806.3" y1="966.6" x2="1802.8" y2="966.6" stroke="#333" stroke-width="1"/>
<line x1="1262.5" y1="942.0" x2="1266.0" y2="942.0" stroke="#333" stroke-width="1"/>
<line x1="1806.3" y1="942.0" x2="1802.8" y2="942.0" stroke="#333" stroke-width="1"/>
<line x1="1262.5" y1="929.4" x2="1266.0" y2="929.4" stroke="#333" stroke-width="1"/>
<line x1="1806.3" y1="929.4" x2="1802.8" y2="929.4" stroke="#333" stroke-width="1"/>
<line x1="1262.5" y1="1046.9" x2="1269.5" y2="1046.9" stroke="#333" stroke-width="1"/>
<line x1="1806.3" y1="1046.9" x2="1799.3" y2="1046.9" stroke="#333" stroke-width="1"/>
<line x1="1262.5" y1="1028.3" x2="1266.0" y2="1028.3" stroke="#333" stroke-width="1"/>
<line x1="1806.3" y1="1028.3" x2="1802.8" y2="1028.3" stroke="#333" stroke-width="1"/>
<line x1="1262.5" y1="1003.8" x2="1266.0" y2="1003.8" stroke="#333" stroke-width="1"/>
<line x1="1806.3" y1="1003.8" x2="1802.8" y2="1003.8" stroke="#333" stroke-width="1"/>
<line x1="1262.5" y1="991.2" x2="1266.0" y2="991.2" stroke="#333" stroke-width="1"/>
<line x1="1806.3" y1="991.2" x2="1802.8" y2="991.2" stroke="#333" stroke-width="1"/>
<rect x="1262.5" y="738.3" width="543.8" height="308.6" fill="none" stroke="#222" stroke-width="1.6"/>
<polyline points="1262.5,800.0 1264.3,845.7 1267.4,869.2 1269.7,872.3 1276.8,861.4 1283.0,859.0 1295.6,854.3 1312.8,866.9 1325.3,872.3 1336.3,874.7 1340.2,875.5 1340.9,813.1 1341.6,874.0 1346.3,868.5 1354.2,880.9 1356.2,880.0 1356.9,773.6 1357.6,875.0 1359.0,876.0 1359.6,769.0 1360.3,870.0 1368.2,878.0 1368.9,792.8 1369.6,877.0 1372.7,879.0 1373.4,814.2 1374.1,878.0 1375.7,877.5 1380.2,893.3 1393.7,913.6 1411.8,931.7 1429.9,943.0 1442.3,955.4 1444.7,891.3 1451.7,919.2 1457.3,921.9 1468.4,902.5 1482.3,890.0 1490.6,888.0 1499.0,894.1 1510.1,910.8 1531.0,924.2 1625.5,924.2 1626.1,905.2 1631.7,917.8 1640.0,916.4 1651.2,909.4 1670.6,913.6 1681.8,913.6 1698.5,916.4 1715.1,921.9 1806.0,921.9" fill="none" stroke="#f0e442" stroke-width="1.3" stroke-linejoin="round"/>
<polyline points="1262.5,760.0 1263.0,743.4 1263.5,801.7 1264.0,748.2 1264.5,805.4 1265.0,748.4 1265.5,799.5 1266.0,754.2 1266.5,794.4 1267.0,755.4 1267.5,803.9 1268.0,758.0 1268.5,801.5 1269.0,758.2 1269.5,799.6 1270.0,763.1 1270.5,806.7 1271.0,763.6 1271.5,807.0 1272.0,768.9 1272.5,795.5 1273.0,771.8 1273.5,796.8 1274.0,771.4 1274.5,801.4 1275.0,774.3 1275.5,806.9 1276.0,806.0 1277.6,790.2 1282.0,815.0 1287.7,837.9 1297.1,845.7 1305.0,852.0 1312.8,856.7 1320.6,863.0 1328.4,862.2 1334.7,853.6 1340.2,855.1 1344.0,852.6 1352.0,864.0 1364.4,868.5 1377.9,876.4 1393.7,882.0 1398.3,879.7 1407.3,886.5 1411.8,895.6 1423.1,892.2 1432.2,897.8 1442.3,908.0 1443.6,840.0 1445.6,773.1 1446.5,830.0 1447.5,805.0 1448.5,827.4 1450.3,863.5 1454.5,894.1 1457.3,896.9 1465.6,888.6 1476.7,890.0 1482.3,891.3 1493.4,901.1 1504.5,894.1 1515.7,890.0 1524.0,892.7 1531.0,896.9 1625.5,896.9 1626.0,840.0 1627.0,781.5 1628.0,830.0 1629.0,805.0 1630.3,869.0 1635.9,894.1 1654.0,890.0 1670.6,896.9 1684.5,908.0 1698.5,915.0 1706.8,915.0 1715.1,912.2 1724.9,910.8 1806.0,910.3" fill="none" stroke="#e69f00" stroke-width="1.3" stroke-linejoin="round"/>
<polyline points="1263.0,800.0 1264.3,827.0 1267.4,855.1 1273.7,872.3 1289.3,891.1 1305.0,905.2 1320.6,914.6 1328.4,920.9 1335.0,926.1 1348.6,927.2 1357.6,928.3 1368.9,934.0 1380.2,943.0 1391.5,952.0 1400.5,954.3 1411.8,964.5 1429.9,972.4 1442.3,986.0 1444.7,885.8 1451.7,916.4 1462.8,926.1 1479.5,921.9 1490.6,926.1 1510.1,944.2 1524.0,949.7 1531.0,951.7 1625.5,951.7 1626.1,877.4 1634.5,910.8 1648.4,919.2 1670.6,935.8 1684.5,944.2 1704.0,955.3 1715.1,955.3 1724.9,950.3 1806.0,950.3" fill="none" stroke="#9400d3" stroke-width="1.3" stroke-linejoin="round"/>
<polyline points="1263.0,805.0 1265.8,845.7 1273.7,870.8 1289.3,888.0 1305.0,905.2 1320.6,920.9 1333.1,931.8 1341.0,935.7 1341.8,919.3 1346.3,922.7 1355.3,935.1 1368.9,940.7 1391.5,958.8 1414.1,974.6 1429.9,980.3 1442.3,992.7 1444.7,880.2 1451.7,913.6 1462.8,920.5 1479.5,924.7 1501.8,941.4 1518.5,952.5 1531.0,959.5 1625.5,959.5 1627.5,860.7 1634.5,908.0 1645.6,913.6 1670.6,933.1 1684.5,947.0 1709.6,965.0 1717.9,963.7 1724.9,960.9 1806.0,960.9" fill="none" stroke="#009e73" stroke-width="1.3" stroke-linejoin="round"/>
<polyline points="1263.0,805.0 1265.0,816.0 1266.6,842.6 1269.0,874.0 1273.7,892.7 1281.5,905.2 1297.1,919.3 1312.8,931.8 1328.4,945.9 1340.2,949.8 1342.9,940.7 1349.7,939.6 1355.3,946.4 1358.7,950.9 1359.9,850.4 1361.0,952.0 1363.2,954.3 1375.7,963.3 1387.0,976.9 1400.5,982.5 1414.1,992.7 1429.9,997.2 1442.3,1010.8 1444.7,896.9 1454.5,935.8 1465.6,940.0 1490.6,960.9 1512.9,980.3 1531.0,988.1 1625.5,988.1 1626.7,874.6 1634.5,935.8 1651.2,949.7 1670.6,966.4 1692.9,985.9 1706.8,992.9 1715.1,992.9 1724.9,988.7 1806.0,988.7" fill="none" stroke="#56b4e9" stroke-width="1.3" stroke-linejoin="round"/>
<polyline points="1262.7,789.4 1264.3,827.0 1267.4,866.1 1272.1,889.6 1278.3,900.5 1289.3,909.9 1305.0,917.7 1320.6,927.1 1333.1,933.4 1340.2,935.0 1340.9,848.1 1342.9,895.6 1348.6,920.4 1355.3,934.0 1356.9,832.3 1358.2,930.0 1359.6,798.4 1361.0,925.0 1364.4,931.7 1368.2,935.0 1368.9,835.7 1370.0,938.0 1372.7,941.0 1373.4,876.4 1374.5,943.0 1377.9,947.5 1402.8,967.9 1425.4,982.5 1442.3,993.8 1444.7,945.6 1451.7,969.2 1462.8,976.2 1476.7,977.6 1499.0,988.7 1518.5,1004.0 1531.0,1010.4 1625.5,1010.4 1626.1,949.7 1631.7,972.0 1642.8,977.6 1670.6,990.1 1692.9,997.0 1720.7,1006.8 1806.0,1006.8" fill="none" stroke="#0072b2" stroke-width="1.5" stroke-linejoin="round"/>
<rect x="1745" y="745.3" width="55" height="14" fill="#fff"/>
<rect x="1745" y="760.65" width="55" height="14" fill="#fff"/>
<rect x="1745" y="776.0" width="55" height="14" fill="#fff"/>
<rect x="1745" y="791.3499999999999" width="55" height="14" fill="#fff"/>
<rect x="1745" y="806.6999999999999" width="55" height="14" fill="#fff"/>
<rect x="1745" y="822.05" width="55" height="14" fill="#fff"/>
<text x="1750" y="756.3" text-anchor="end" font-family="Liberation Sans" font-size="11.2" fill="#111">Ux</text>
<line x1="1757.6" y1="752.3" x2="1793" y2="752.3" stroke="#9400d3" stroke-width="1.5"/>
<text x="1750" y="771.6" text-anchor="end" font-family="Liberation Sans" font-size="11.2" fill="#111">Uy</text>
<line x1="1757.6" y1="767.6" x2="1793" y2="767.6" stroke="#009e73" stroke-width="1.5"/>
<text x="1750" y="787.0" text-anchor="end" font-family="Liberation Sans" font-size="11.2" fill="#111">Uz</text>
<line x1="1757.6" y1="783.0" x2="1793" y2="783.0" stroke="#56b4e9" stroke-width="1.5"/>
<text x="1750" y="802.3" text-anchor="end" font-family="Liberation Sans" font-size="11.2" fill="#111">p</text>
<line x1="1757.6" y1="798.3" x2="1793" y2="798.3" stroke="#e69f00" stroke-width="1.5"/>
<text x="1750" y="817.7" text-anchor="end" font-family="Liberation Sans" font-size="11.2" fill="#111">k</text>
<line x1="1757.6" y1="813.7" x2="1793" y2="813.7" stroke="#f0e442" stroke-width="1.5"/>
<text x="1750" y="833.0" text-anchor="end" font-family="Liberation Sans" font-size="11.2" fill="#111">omega</text>
<line x1="1757.6" y1="829.0" x2="1793" y2="829.0" stroke="#0072b2" stroke-width="1.5"/>
<text x="1262.5" y="1064" text-anchor="middle" font-family="Liberation Sans" font-size="9" fill="#111">0</text>
<text x="1353.3" y="1064" text-anchor="middle" font-family="Liberation Sans" font-size="9" fill="#111">500</text>
<text x="1444.1" y="1064" text-anchor="middle" font-family="Liberation Sans" font-size="9" fill="#111">1000</text>
<text x="1534.9" y="1064" text-anchor="middle" font-family="Liberation Sans" font-size="9" fill="#111">1500</text>
<text x="1625.7" y="1064" text-anchor="middle" font-family="Liberation Sans" font-size="9" fill="#111">2000</text>
<text x="1716.5" y="1064" text-anchor="middle" font-family="Liberation Sans" font-size="9" fill="#111">2500</text>
<text x="1807.3" y="1064" text-anchor="middle" font-family="Liberation Sans" font-size="9" fill="#111">3000</text>
<text x="1239.5" y="742.3" font-family="Liberation Sans" font-size="9.5" fill="#111">10</text>
<text x="1250.5" y="736.8" font-family="Liberation Sans" font-size="7" fill="#111">0</text>
<text x="1239.5" y="804.0" font-family="Liberation Sans" font-size="9.5" fill="#111">10</text>
<text x="1250.5" y="798.5" font-family="Liberation Sans" font-size="7" fill="#111">-1</text>
<text x="1239.5" y="865.7" font-family="Liberation Sans" font-size="9.5" fill="#111">10</text>
<text x="1250.5" y="860.2" font-family="Liberation Sans" font-size="7" fill="#111">-2</text>
<text x="1239.5" y="927.5" font-family="Liberation Sans" font-size="9.5" fill="#111">10</text>
<text x="1250.5" y="922.0" font-family="Liberation Sans" font-size="7" fill="#111">-3</text>
<text x="1239.5" y="989.2" font-family="Liberation Sans" font-size="9.5" fill="#111">10</text>
<text x="1250.5" y="983.7" font-family="Liberation Sans" font-size="7" fill="#111">-4</text>
<text x="1239.5" y="1050.9" font-family="Liberation Sans" font-size="9.5" fill="#111">10</text>
<text x="1250.5" y="1045.4" font-family="Liberation Sans" font-size="7" fill="#111">-5</text>
<text x="1534" y="711.5" text-anchor="middle" font-family="Liberation Sans" font-size="20" fill="#111">Residuals</text>
<text x="1534" y="1086" text-anchor="middle" font-family="Liberation Sans" font-size="14.5" fill="#111">Iterations [ - ]</text>
<text x="0" y="0" transform="translate(1228,892) rotate(-90)" text-anchor="middle" font-family="Liberation Sans" font-size="14.5" fill="#111">Residuals [ - ]</text>
</svg><svg width="0" height="0" style="position:absolute"><defs>
<linearGradient id="gG" x1="0" y1="0" x2="0" y2="1"><stop offset="0" stop-color="#b8eca0"/><stop offset="1" stop-color="#62b83e"/></linearGradient>
<linearGradient id="gF" x1="0" y1="0" x2="0" y2="1"><stop offset="0" stop-color="#fff4c8"/><stop offset="1" stop-color="#f0c060"/></linearGradient>
<linearGradient id="gS" x1="0" y1="0" x2="1" y2="0"><stop offset="0" stop-color="#f4f4f0"/><stop offset="1" stop-color="#a8a8a0"/></linearGradient>
<linearGradient id="gD" x1="0" y1="0" x2="0" y2="1"><stop offset="0" stop-color="#c8c8c8"/><stop offset="1" stop-color="#8a8a8a"/></linearGradient>
<linearGradient id="gC" x1="0" y1="0" x2="0" y2="1"><stop offset="0" stop-color="#d8d0c0"/><stop offset="0.45" stop-color="#d0d0c8"/><stop offset="0.5" stop-color="#30c0ff"/><stop offset="1" stop-color="#2030b0"/></linearGradient>
<linearGradient id="gB" x1="0" y1="0" x2="0" y2="1"><stop offset="0" stop-color="#78c8f8"/><stop offset="1" stop-color="#1a78d0"/></linearGradient>
</defs></svg>
<div class="a" style="left:7px;top:27px;width:5px;height:30px;background-image:radial-gradient(circle at 1.2px 1.2px,#b4b4b4 0.9px,transparent 1.2px),radial-gradient(circle at 3.8px 3.8px,#b4b4b4 0.9px,transparent 1.2px);background-size:5px 5.2px"></div>
<svg class="a" style="left:17.0px;top:30.0px" width="24" height="24" viewBox="0 0 24 24"><path d="M3 8 L3 20 L19 20 L22 10 L8 10 L7 8 Z" fill="url(#gF)" stroke="#7a7254" stroke-width="1"/><path d="M9 6 L19 4 L21 10 L11 12 Z" fill="#fff" stroke="#888" stroke-width="0.8"/><path d="M3 20 L7 12 L22 11 L19 20 Z" fill="url(#gF)" stroke="#7a7254" stroke-width="1"/></svg>
<svg class="a" style="left:51.0px;top:30.0px" width="24" height="24" viewBox="0 0 24 24"><path d="M3 10 L3 21 L19 21 L22 12 L8 12 L7 10 Z" fill="url(#gF)" stroke="#7a7254" stroke-width="1"/><path d="M3 21 L7 14 L22 13 L19 21 Z" fill="url(#gF)" stroke="#7a7254" stroke-width="1"/><path d="M11 2 h5 v5 h3 l-5.5 5 l-5.5 -5 h3 Z" fill="#5cc040" stroke="#3a8a2a" stroke-width="0.6"/></svg>
<div class="a" style="left:81px;top:27px;width:1px;height:30px;background:#b4b4b4"></div>
<svg class="a" style="left:87.0px;top:30.0px" width="24" height="24" viewBox="0 0 24 24"><rect x="4" y="3" width="8" height="15" fill="url(#gS)" stroke="#6c6c58" stroke-width="1"/><line x1="5" y1="7" x2="11" y2="7" stroke="#777"/><line x1="5" y1="10" x2="11" y2="10" stroke="#777"/><rect x="12" y="3" width="8" height="15" fill="url(#gS)" stroke="#6c6c58" stroke-width="1"/><line x1="13" y1="7" x2="19" y2="7" stroke="#777"/><line x1="13" y1="10" x2="19" y2="10" stroke="#777"/><path d="M7 18 v3 h10 v-3" fill="none" stroke="#6c6c58" stroke-width="1.2"/><circle cx="12" cy="20" r="3.2" fill="#5ad040" stroke="#3a9a2a" stroke-width="0.6"/></svg>
<svg class="a" style="left:121.0px;top:30.0px" width="24" height="24" viewBox="0 0 24 24"><rect x="4" y="3" width="8" height="15" fill="url(#gS)" stroke="#6c6c58" stroke-width="1"/><line x1="5" y1="7" x2="11" y2="7" stroke="#777"/><line x1="5" y1="10" x2="11" y2="10" stroke="#777"/><rect x="12" y="3" width="8" height="15" fill="url(#gS)" stroke="#6c6c58" stroke-width="1"/><line x1="13" y1="7" x2="19" y2="7" stroke="#777"/><line x1="13" y1="10" x2="19" y2="10" stroke="#777"/><path d="M7 18 v3 h10 v-3" fill="none" stroke="#6c6c58" stroke-width="1.2"/><path d="M9 17 L15 23 M15 17 L9 23" stroke="#e84030" stroke-width="2"/></svg>
<div class="a" style="left:151px;top:27px;width:1px;height:30px;background:#b4b4b4"></div>
<svg class="a" style="left:157.0px;top:30.0px" width="24" height="24" viewBox="0 0 24 24"><path d="M5 14 A8 7 0 1 1 12 21" fill="none" stroke="#e83820" stroke-width="3.2"/><path d="M2 9 L10 10 L4 17 Z" fill="#e83820"/></svg>
<svg class="a" style="left:191.0px;top:30.0px" width="24" height="24" viewBox="0 0 24 24"><path d="M19 14 A8 7 0 1 0 12 21" fill="none" stroke="#b4b4b4" stroke-width="3.2"/><path d="M22 9 L14 10 L20 17 Z" fill="#b4b4b4"/></svg>
<div class="a" style="left:221px;top:27px;width:1px;height:30px;background:#b4b4b4"></div>
<svg class="a" style="left:227.0px;top:30.0px" width="24" height="24" viewBox="0 0 24 24"><text x="12" y="20" text-anchor="middle" font-family="Liberation Sans" font-weight="bold" font-size="21" fill="#2a8ae0">?</text></svg>
<div class="a" style="left:256px;top:27px;width:1px;height:30px;background:#b4b4b4"></div>
<svg class="a" style="left:263.0px;top:30.0px" width="24" height="24" viewBox="0 0 24 24"><path d="M3 9 L9 7 L15 9 L15 19 L9 21 L3 19 Z" fill="url(#gS)" stroke="#5aa040" stroke-width="1.4"/><path d="M10 11 L19 4 M14 4 h6 v6" fill="none" stroke="#5cc040" stroke-width="2.4"/></svg>
<svg class="a" style="left:296.0px;top:30.0px" width="24" height="24" viewBox="0 0 24 24"><rect x="4" y="3" width="13" height="16" fill="none" stroke="#777" stroke-width="1" stroke-dasharray="1.5,1.5"/><rect x="7" y="3" width="8" height="15" fill="url(#gC)"/><path d="M15 15 L22 21 L19 21 L20 23 L18 23 L17 21 L15 22 Z" fill="#5a6a50"/></svg>
<svg class="a" style="left:331.0px;top:30.0px" width="24" height="24" viewBox="0 0 24 24"><ellipse cx="11" cy="12" rx="9" ry="8" fill="#d4d4cc" stroke="#8a8a80" stroke-width="1"/><circle cx="8" cy="11" r="2" fill="#e84030"/><circle cx="12" cy="7" r="1.8" fill="#40a0e0"/><circle cx="9" cy="16" r="1.8" fill="#60c040"/><line x1="20" y1="2" x2="13" y2="19" stroke="#5a9a40" stroke-width="1.8"/><path d="M18 21 h5 l-2.5 3 Z" fill="#000"/></svg>
<div class="a" style="left:370px;top:27px;width:5px;height:30px;background-image:radial-gradient(circle at 1.2px 1.2px,#b4b4b4 0.9px,transparent 1.2px),radial-gradient(circle at 3.8px 3.8px,#b4b4b4 0.9px,transparent 1.2px);background-size:5px 5.2px"></div>
<svg class="a" style="left:380.0px;top:30.0px" width="24" height="24" viewBox="0 0 24 24"><path d="M3 4 h3 v16 h-3 Z" fill="url(#gG)" stroke="#6a7a5a" stroke-width="1"/><path d="M21 4 L21 20 L8 12 Z" fill="url(#gG)" stroke="#6a7a5a" stroke-width="1"/></svg>
<svg class="a" style="left:415.0px;top:30.0px" width="24" height="24" viewBox="0 0 24 24"><path d="M14 4 L14 20 L2 12 Z" fill="url(#gG)" stroke="#6a7a5a" stroke-width="1"/><path d="M16 4 h4 v16 h-4 Z" fill="url(#gG)" stroke="#6a7a5a" stroke-width="1"/></svg>
<svg class="a" style="left:448.0px;top:30.0px" width="24" height="24" viewBox="0 0 24 24"><path d="M7 5 L19 12 L7 19 Z" fill="url(#gG)" stroke="#6a7a5a" stroke-width="1"/></svg>
<svg class="a" style="left:482.0px;top:30.0px" width="24" height="24" viewBox="0 0 24 24"><path d="M3 4 h4 v16 h-4 Z" fill="url(#gG)" stroke="#6a7a5a" stroke-width="1"/><path d="M9 4 L21 12 L9 20 Z" fill="url(#gG)" stroke="#6a7a5a" stroke-width="1"/></svg>
<svg class="a" style="left:516.0px;top:30.0px" width="24" height="24" viewBox="0 0 24 24"><path d="M3 4 L16 12 L3 20 Z" fill="url(#gG)" stroke="#6a7a5a" stroke-width="1"/><path d="M18 4 h3 v16 h-3 Z" fill="url(#gG)" stroke="#6a7a5a" stroke-width="1"/></svg>
<svg class="a" style="left:550.0px;top:30.0px" width="24" height="24" viewBox="0 0 24 24"><path d="M3 12 V7 H15 V3 L21 8.5 L15 14 V10 H6 V12 Z" fill="url(#gG)" stroke="#6a7a5a" stroke-width="1"/><path d="M21 12 V17 H9 V21 L3 15.5 L9 10 V14 H18 V12 Z" fill="url(#gG)" stroke="#6a7a5a" stroke-width="1"/></svg>
<div class="a" style="left:588px;top:27px;width:5px;height:30px;background-image:radial-gradient(circle at 1.2px 1.2px,#b4b4b4 0.9px,transparent 1.2px),radial-gradient(circle at 3.8px 3.8px,#b4b4b4 0.9px,transparent 1.2px);background-size:5px 5.2px"></div>
<div class="t" style="left:594px;top:34px;letter-spacing:0.2px">Time:</div>
<div class="inp" style="left:630px;top:32px;width:127px;height:20px;background:#f0f0f0;border-color:#9a9a9a"></div>
<div class="t" style="left:636px;top:34px;color:#b0b0b0">3000</div>
<div class="inp" style="left:760px;top:32px;width:52px;height:20px"></div>
<div class="t" style="left:764px;top:34px">3</div>
<div class="a" style="left:796px;top:33px;width:15px;height:9px;background:linear-gradient(#fafafa,#dcdcdc);border-left:1px solid #aaa"></div>
<div class="a" style="left:796px;top:42px;width:15px;height:9px;background:linear-gradient(#fafafa,#dcdcdc);border-left:1px solid #aaa;border-top:1px solid #bbb"></div>
<svg class="a" style="left:799px;top:35px" width="10" height="15" viewBox="0 0 10 15"><path d="M1 5 L5 1 L9 5 Z M1 10 L9 10 L5 14 Z" fill="#111"/></svg>
<div class="t" style="left:814px;top:34px;letter-spacing:0.1px">of 4</div>
<div class="a" style="left:7px;top:65px;width:5px;height:31px;background-image:radial-gradient(circle at 1.2px 1.2px,#b4b4b4 0.9px,transparent 1.2px),radial-gradient(circle at 3.8px 3.8px,#b4b4b4 0.9px,transparent 1.2px);background-size:5px 5.2px"></div>
<svg class="a" style="left:17.0px;top:68.5px" width="24" height="24" viewBox="0 0 24 24"><rect x="7" y="3" width="10" height="18" fill="url(#gD)"/></svg>
<svg class="a" style="left:51.5px;top:68.5px" width="24" height="24" viewBox="0 0 24 24"><circle cx="9" cy="8" r="6" fill="#d6d6d6" stroke="#bdbdbd"/><rect x="9" y="12" width="13" height="9" fill="url(#gD)"/></svg>
<svg class="a" style="left:85.0px;top:68.5px" width="24" height="24" viewBox="0 0 24 24"><path d="M2 7 L7 3 V5.5 H17 V3 L22 7 L17 11 V8.5 H7 V11 Z" fill="#d4d4d4" stroke="#c0c0c0" stroke-width="0.5"/><path d="M3 20 H21 M3 17 V22 M8 18 V21 M13 18 V21 M18 18 V21 M21 17 V22" stroke="#c4c4c4" stroke-width="1.2" fill="none"/></svg>
<svg class="a" style="left:119.0px;top:68.5px" width="24" height="24" viewBox="0 0 24 24"><path d="M2 7 L7 3 V5.5 H17 V3 L22 7 L17 11 V8.5 H7 V11 Z" fill="#d4d4d4" stroke="#c0c0c0" stroke-width="0.5"/><path d="M3 20 H12 M3 17 V22 M8 18 V21" stroke="#c4c4c4" stroke-width="1.2"/><path d="M21 13 A5 5 0 1 0 21 22" fill="none" stroke="#4a4a4a" stroke-width="2.5"/></svg>
<svg class="a" style="left:153.0px;top:68.5px" width="24" height="24" viewBox="0 0 24 24"><path d="M2 7 L7 3 V5.5 H17 V3 L22 7 L17 11 V8.5 H7 V11 Z" fill="#d4d4d4" stroke="#c0c0c0" stroke-width="0.5"/><path d="M3 19 H10 M3 17 V22" stroke="#c4c4c4" stroke-width="1.2"/><ellipse cx="16" cy="18" rx="7" ry="4" fill="#eee" stroke="#555" stroke-width="1.2"/><circle cx="16" cy="18" r="2.6" fill="#444"/></svg>
<div class="btn" style="left:182px;top:71px;width:150px;height:20px;background:linear-gradient(#eeeef0,#d6d6da)"></div>
<div class="a" style="left:315px;top:74px;width:1px;height:14px;background:#a8a8a8"></div>
<svg class="a" style="left:319px;top:78px" width="10" height="6" viewBox="0 0 10 6"><path d="M1 1 L9 1 L5 5 Z" fill="#666"/></svg>
<div class="btn" style="left:336px;top:71px;width:79px;height:20px;background:linear-gradient(#eeeef0,#d6d6da)"></div>
<div class="a" style="left:399px;top:74px;width:1px;height:14px;background:#a8a8a8"></div>
<svg class="a" style="left:403px;top:78px" width="10" height="6" viewBox="0 0 10 6"><path d="M1 1 L9 1 L5 5 Z" fill="#666"/></svg>
<div class="a" style="left:425px;top:66px;width:5px;height:30px;background-image:radial-gradient(circle at 1.2px 1.2px,#b4b4b4 0.9px,transparent 1.2px),radial-gradient(circle at 3.8px 3.8px,#b4b4b4 0.9px,transparent 1.2px);background-size:5px 5.2px"></div>
<div class="btn" style="left:430px;top:71px;width:150px;height:20px;background:linear-gradient(#eeeef0,#d6d6da)"></div>
<div class="a" style="left:564px;top:74px;width:1px;height:14px;background:#a8a8a8"></div>
<svg class="a" style="left:568px;top:78px" width="10" height="6" viewBox="0 0 10 6"><path d="M1 1 L9 1 L5 5 Z" fill="#666"/></svg>
<div class="t" style="left:434px;top:73px;color:#a0a0a0">Representation</div>
<div class="a" style="left:588px;top:66px;width:5px;height:30px;background-image:radial-gradient(circle at 1.2px 1.2px,#b4b4b4 0.9px,transparent 1.2px),radial-gradient(circle at 3.8px 3.8px,#b4b4b4 0.9px,transparent 1.2px);background-size:5px 5.2px"></div>
<svg class="a" style="left:600.0px;top:68.5px" width="24" height="24" viewBox="0 0 24 24"><rect x="3" y="3" width="18" height="18" fill="#e8e8e0" stroke="#8a8a7a" stroke-width="1.2"/><path d="M6 6 L10 10 M18 6 L14 10 M6 18 L10 14 M18 18 L14 14" stroke="#7a9a6a" stroke-width="1.6"/><path d="M5 5 h4 l-4 4 Z M19 5 v4 l-4 -4 Z M5 19 v-4 l4 4 Z M19 19 h-4 l4 -4 Z" fill="#7ac060"/></svg>
<svg class="a" style="left:634.0px;top:68.5px" width="24" height="24" viewBox="0 0 24 24"><rect x="3" y="3" width="18" height="18" fill="#e8e8e0" stroke="#8a8a7a" stroke-width="1.2"/><path d="M6 6 L10 10 M18 6 L14 10 M6 18 L10 14 M18 18 L14 14" stroke="#7a9a6a" stroke-width="1.6"/><path d="M5 5 h4 l-4 4 Z M19 5 v4 l-4 -4 Z M5 19 v-4 l4 4 Z M19 19 h-4 l4 -4 Z" fill="#7ac060"/><text x="2" y="13" font-family="Liberation Sans" font-weight="bold" font-size="14" fill="#111">D</text></svg>
<svg class="a" style="left:669.0px;top:68.5px" width="24" height="24" viewBox="0 0 24 24"><rect x="3" y="4" width="14" height="13" fill="none" stroke="#777" stroke-width="1" stroke-dasharray="1.6,1.6"/><circle cx="17" cy="17" r="4" fill="#e8f8e0" stroke="#5ab040" stroke-width="1.6"/><line x1="19.5" y1="19.5" x2="22" y2="22" stroke="#5ab040" stroke-width="2"/></svg>
<svg class="a" style="left:703.0px;top:68.5px" width="24" height="24" viewBox="0 0 24 24"><path d="M15 4 V18" stroke="#70c050" stroke-width="2"/><path d="M12 6 L15 2 L18 6 Z" fill="#70c050"/><path d="M15 18 H3" stroke="#f0c020" stroke-width="2"/><path d="M5 15 L1 18 L5 21 Z" fill="#f0c020"/><rect x="13" y="15" width="6" height="6" fill="#e83020"/><text x="1" y="9" font-family="Liberation Sans" font-size="8" fill="#333">+X</text></svg>
<svg class="a" style="left:736.0px;top:68.5px" width="24" height="24" viewBox="0 0 24 24"><path d="M6 4 V18" stroke="#70c050" stroke-width="2"/><path d="M3 6 L6 2 L9 6 Z" fill="#70c050"/><path d="M6 18 H20" stroke="#f0c020" stroke-width="2"/><path d="M19 15 L23 18 L19 21 Z" fill="#f0c020"/><rect x="3" y="15" width="6" height="6" fill="#e83020"/><text x="10" y="9" font-family="Liberation Sans" font-size="8" fill="#333">-X</text></svg>
<svg class="a" style="left:770.0px;top:68.5px" width="24" height="24" viewBox="0 0 24 24"><path d="M6 4 V18" stroke="#70c050" stroke-width="2"/><path d="M3 6 L6 2 L9 6 Z" fill="#70c050"/><path d="M6 18 H20" stroke="#e86040" stroke-width="2"/><path d="M19 15 L23 18 L19 21 Z" fill="#e86040"/><rect x="3" y="15" width="6" height="6" fill="#f0c020"/><text x="10" y="9" font-family="Liberation Sans" font-size="8" fill="#333">+Y</text></svg>
<svg class="a" style="left:804.0px;top:68.5px" width="24" height="24" viewBox="0 0 24 24"><path d="M15 4 V18" stroke="#70c050" stroke-width="2"/><path d="M12 6 L15 2 L18 6 Z" fill="#70c050"/><path d="M15 18 H3" stroke="#e86040" stroke-width="2"/><path d="M5 15 L1 18 L5 21 Z" fill="#e86040"/><rect x="13" y="15" width="6" height="6" fill="#f0c020"/><text x="1" y="9" font-family="Liberation Sans" font-size="8" fill="#333">-Y</text></svg>
<svg class="a" style="left:838.0px;top:68.5px" width="24" height="24" viewBox="0 0 24 24"><path d="M15 4 V18" stroke="#f0c020" stroke-width="2"/><path d="M12 6 L15 2 L18 6 Z" fill="#f0c020"/><path d="M15 18 H3" stroke="#e86040" stroke-width="2"/><path d="M5 15 L1 18 L5 21 Z" fill="#e86040"/><rect x="13" y="15" width="6" height="6" fill="#60b040"/><text x="1" y="9" font-family="Liberation Sans" font-size="8" fill="#333">+Z</text></svg>
<svg class="a" style="left:872.0px;top:68.5px" width="24" height="24" viewBox="0 0 24 24"><path d="M6 4 V18" stroke="#f0c020" stroke-width="2"/><path d="M3 6 L6 2 L9 6 Z" fill="#f0c020"/><path d="M6 18 H20" stroke="#e86040" stroke-width="2"/><path d="M19 15 L23 18 L19 21 Z" fill="#e86040"/><rect x="3" y="15" width="6" height="6" fill="#60b040"/><text x="10" y="9" font-family="Liberation Sans" font-size="8" fill="#333">-Z</text></svg>
<div class="a" style="left:910px;top:66px;width:5px;height:30px;background-image:radial-gradient(circle at 1.2px 1.2px,#b4b4b4 0.9px,transparent 1.2px),radial-gradient(circle at 3.8px 3.8px,#b4b4b4 0.9px,transparent 1.2px);background-size:5px 5.2px"></div>
<div class="a" style="left:916px;top:65px;width:34px;height:32px;border:1px solid #8a8a8a;border-radius:3px;background:linear-gradient(#c8c8cc,#d8d8dc)"></div>
<svg class="a" style="left:921.0px;top:68.5px" width="24" height="24" viewBox="0 0 24 24"><path d="M6 20 V10" stroke="#f0c020" stroke-width="2"/><path d="M3 11 L6 6 L9 11 Z" fill="#f0c020"/><path d="M6 20 L18 17" stroke="#e86040" stroke-width="2"/><path d="M6 20 L3 23" stroke="#70c050" stroke-width="2"/><ellipse cx="17" cy="8" rx="6" ry="3.5" fill="#eee" stroke="#334" stroke-width="1"/><circle cx="17" cy="8" r="2.2" fill="#2a3a70"/></svg>
<svg class="a" style="left:954.5px;top:68.5px" width="24" height="24" viewBox="0 0 24 24"><path d="M19 8 A8.5 8.5 0 1 0 20.5 14" fill="none" stroke="#68b850" stroke-width="2.6"/><path d="M16 3 L22 3 L21 10 Z" fill="#68b850"/><circle cx="12" cy="12" r="2.5" fill="#e8c020"/></svg>
<svg class="a" style="left:988.0px;top:68.5px" width="24" height="24" viewBox="0 0 24 24"><path d="M19 8 A8.5 8.5 0 1 0 20.5 14" fill="none" stroke="#c0c0c0" stroke-width="2.6"/><path d="M16 3 L22 3 L21 10 Z" fill="#c0c0c0"/><circle cx="12" cy="12" r="3" fill="none" stroke="#bbb" stroke-width="1.2"/><path d="M12 6 V18 M6 12 H18" stroke="#c4c4c4"/></svg>
<svg class="a" style="left:1022.5px;top:68.5px" width="24" height="24" viewBox="0 0 24 24"><path d="M19 8 A8.5 8.5 0 1 0 20.5 14" fill="none" stroke="#68b850" stroke-width="2.6"/><path d="M16 3 L22 3 L21 10 Z" fill="#68b850"/><path d="M14 14 L22 21 L19 21.5 L20.5 24 L18.5 24 L17 22 L15 23 Z" fill="#111"/></svg>
<div class="a" style="left:1062px;top:66px;width:5px;height:30px;background-image:radial-gradient(circle at 1.2px 1.2px,#b4b4b4 0.9px,transparent 1.2px),radial-gradient(circle at 3.8px 3.8px,#b4b4b4 0.9px,transparent 1.2px);background-size:5px 5.2px"></div>
<div class="a" style="left:1076px;top:66px;width:5px;height:30px;background-image:radial-gradient(circle at 1.2px 1.2px,#b4b4b4 0.9px,transparent 1.2px),radial-gradient(circle at 3.8px 3.8px,#b4b4b4 0.9px,transparent 1.2px);background-size:5px 5.2px"></div>
<svg class="a" style="left:1087.0px;top:68.5px" width="24" height="24" viewBox="0 0 24 24"><rect x="5" y="3" width="14" height="18" rx="1" fill="#ececec" stroke="#9a9a9a" stroke-width="1"/><rect x="7" y="5" width="10" height="3" fill="#fff" stroke="#aaa" stroke-width="0.6"/><path d="M8 11 h2 M11 11 h2 M14 11 h2 M8 14 h2 M11 14 h2 M14 14 h2 M8 17 h2 M11 17 h2 M14 17 h2" stroke="#aaa" stroke-width="1.6"/></svg>
<svg class="a" style="left:1122.0px;top:68.5px" width="24" height="24" viewBox="0 0 24 24"><ellipse cx="12" cy="12" rx="9" ry="8" fill="#c8c8c8" stroke="#b0b0b0"/><ellipse cx="13" cy="13" rx="5" ry="4" fill="#e4e4e4" stroke="#a8a8a8"/><ellipse cx="14" cy="14" rx="2" ry="1.5" fill="#bbb"/></svg>
<svg class="a" style="left:1156.0px;top:68.5px" width="24" height="24" viewBox="0 0 24 24"><path d="M4 7 L12 3 L20 7 L20 17 L12 21 L4 17 Z" fill="#e4e4e4" stroke="#b0b0b0" stroke-width="1.2"/><path d="M4 7 L12 11 L20 7 M12 11 V21" fill="none" stroke="#b8b8b8" stroke-width="1"/><rect x="8" y="9" width="8" height="8" fill="none" stroke="#c4c4c4"/></svg>
<svg class="a" style="left:1192.0px;top:68.5px" width="24" height="24" viewBox="0 0 24 24"><path d="M4 7 L12 3 L20 7 L20 17 L12 21 L4 17 Z" fill="#e4e4e4" stroke="#b0b0b0" stroke-width="1.2"/><path d="M4 7 L12 11 L20 7 M12 11 V21" fill="none" stroke="#b8b8b8" stroke-width="1"/><path d="M7 9 L12 6.5 L17 9 V15 L12 17.5 L7 15 Z" fill="none" stroke="#c4c4c4"/></svg>
<svg class="a" style="left:1227.0px;top:68.5px" width="24" height="24" viewBox="0 0 24 24"><path d="M4 7 L12 3 L20 7 L20 17 L12 21 L4 17 Z" fill="#e4e4e4" stroke="#b0b0b0" stroke-width="1.2"/><path d="M4 7 L12 11 L20 7 M12 11 V21" fill="none" stroke="#b8b8b8" stroke-width="1"/><rect x="7" y="9" width="6" height="6" fill="#cfcfcf" stroke="#999"/></svg>
<svg class="a" style="left:1262.0px;top:68.5px" width="24" height="24" viewBox="0 0 24 24"><path d="M4 7 L12 3 L20 7 L20 17 L12 21 L4 17 Z" fill="#e4e4e4" stroke="#b0b0b0" stroke-width="1.2"/><path d="M4 7 L12 11 L20 7 M12 11 V21" fill="none" stroke="#b8b8b8" stroke-width="1"/><path d="M8 10 L12 8 L16 10 V14 L12 16 L8 14 Z" fill="#eee" stroke="#bbb"/></svg>
<svg class="a" style="left:1297.0px;top:68.5px" width="24" height="24" viewBox="0 0 24 24"><circle cx="12" cy="12" r="8.5" fill="#e8e8e8" stroke="#a8a8a8" stroke-width="1.2"/><ellipse cx="12" cy="12" rx="4" ry="8.5" fill="none" stroke="#aaa"/><path d="M3.5 12 H20.5" stroke="#aaa"/><circle cx="12" cy="3.5" r="1.8" fill="#ccc" stroke="#999"/><circle cx="12" cy="20.5" r="1.8" fill="#ccc" stroke="#999"/><circle cx="3.5" cy="12" r="1.8" fill="#ccc" stroke="#999"/><circle cx="20.5" cy="12" r="1.8" fill="#ccc" stroke="#999"/></svg>
<svg class="a" style="left:1332.0px;top:68.5px" width="24" height="24" viewBox="0 0 24 24"><path d="M2 5 Q8 2 12 6 T22 6 M2 19 Q8 22 12 18 T22 18 M10 10 Q16 8 22 11 M10 14 Q16 16 22 13" fill="none" stroke="#a8a8a8" stroke-width="1.4"/><circle cx="7" cy="12" r="3" fill="#c4c4c4" stroke="#999"/></svg>
<svg class="a" style="left:1367.0px;top:68.5px" width="24" height="24" viewBox="0 0 24 24"><path d="M3 20 Q6 10 20 5 L21 19 Z" fill="#d8d8d8" stroke="#bbb"/></svg>
<svg class="a" style="left:1402.0px;top:68.5px" width="24" height="24" viewBox="0 0 24 24"><circle cx="12" cy="12" r="10" fill="#f0f0f0" stroke="#6a6a5a" stroke-width="1.2"/><circle cx="14.5" cy="13.5" r="4" fill="#5ac040"/><circle cx="9" cy="8" r="2" fill="none" stroke="#6a7a9a"/><circle cx="9" cy="16" r="2" fill="none" stroke="#6a7a9a"/></svg>
<svg class="a" style="left:1437.0px;top:68.5px" width="24" height="24" viewBox="0 0 24 24"><circle cx="14" cy="14" r="8.5" fill="none" stroke="#9a9a9a" stroke-width="1.2"/><circle cx="16" cy="14" r="3" fill="#c8c8c8" stroke="#999"/><circle cx="4" cy="3.5" r="2" fill="none" stroke="#aaa"/><circle cx="11" cy="18" r="1.8" fill="none" stroke="#aaa"/></svg>
<div class="a" style="left:1475px;top:66px;width:5px;height:30px;background-image:radial-gradient(circle at 1.2px 1.2px,#b4b4b4 0.9px,transparent 1.2px),radial-gradient(circle at 3.8px 3.8px,#b4b4b4 0.9px,transparent 1.2px);background-size:5px 5.2px"></div>
<svg class="a" style="left:1486.0px;top:68.5px" width="24" height="24" viewBox="0 0 24 24"><rect x="2" y="2" width="16" height="16" fill="#8ec8f0" stroke="#3a6ab0" stroke-width="1.2"/><rect x="3" y="3" width="8" height="8" fill="#e0f0ff"/><rect x="15" y="15" width="8" height="8" fill="#3ab030" stroke="#6ad060" stroke-dasharray="1.5,1"/></svg>
<svg class="a" style="left:1521.0px;top:68.5px" width="24" height="24" viewBox="0 0 24 24"><circle cx="6" cy="6" r="4.5" fill="#f0f0f0" stroke="#999"/><path d="M6 3 V6 H8" stroke="#888" fill="none"/><circle cx="17" cy="6" r="4.5" fill="#bbb" stroke="#999"/><path d="M2 20 L5 15 L7 20 L9 15 L11 20 L13 15 L15 20 L17 15 L19 20 L21 16" fill="none" stroke="#aaa"/><path d="M2 22 H22" stroke="#aaa"/></svg>
<svg class="a" style="left:1556.0px;top:68.5px" width="24" height="24" viewBox="0 0 24 24"><path d="M2 6 L20 2 L21 20 L4 21 Z" fill="#d8d8d8" stroke="#bbb"/><path d="M3 18 L6 14 L8 17 L10 11 L12 15 L14 9 L16 13 L19 8" fill="none" stroke="#888"/></svg>
<svg class="a" style="left:1591.0px;top:68.5px" width="24" height="24" viewBox="0 0 24 24"><circle cx="6" cy="6" r="4.5" fill="#f4f4f4" stroke="#556"/><path d="M6 3 V6 H8" stroke="#555" fill="none"/><rect x="13" y="2" width="9" height="8" fill="none" stroke="#888" stroke-dasharray="1,1"/><path d="M15 8 L17.5 4 L20 8 Z" fill="#5ac040"/><path d="M2 19 L4 15 L6 20 L8 14 L10 20 L12 14 L14 20 L16 14 L18 20 L21 15" fill="none" stroke="#2a8ae0" stroke-width="1.2"/><path d="M2 22 H22" stroke="#777"/></svg>
<svg class="a" style="left:1626.0px;top:68.5px" width="24" height="24" viewBox="0 0 24 24"><path d="M4 6 L12 2 L20 6 L20 18 L12 22 L4 18 Z" fill="#ececec" stroke="#ccc"/><path d="M12 6 V18 M7 9 L17 15 M17 9 L7 15" stroke="#aaa" stroke-width="1.2"/></svg>
<div class="a" style="left:1665px;top:66px;width:5px;height:30px;background-image:radial-gradient(circle at 1.2px 1.2px,#b4b4b4 0.9px,transparent 1.2px),radial-gradient(circle at 3.8px 3.8px,#b4b4b4 0.9px,transparent 1.2px);background-size:5px 5.2px"></div>
<svg class="a" style="left:1675.0px;top:68.5px" width="24" height="24" viewBox="0 0 24 24"><path d="M2 6 Q12 2 22 6 V18 Q12 22 2 18 Z" fill="#e0e0e0" stroke="#ccc"/><path d="M10 9 L20 7 L19 16 Z" fill="#b4b4b4"/></svg>
<svg class="a" style="left:1710.0px;top:68.5px" width="24" height="24" viewBox="0 0 24 24"><path d="M2 6 Q8 0 14 6 M8 6 Q14 0 21 5 M2 12 Q8 6 14 12 M8 12 Q14 6 21 11 M2 18 Q8 12 14 18 M8 18 Q14 12 21 17" fill="none" stroke-width="1.5" stroke="#e84030"/><path d="M8 12 Q14 6 21 11 M8 6 Q14 0 21 5" stroke="#f0a030" fill="none" stroke-width="1.5"/><path d="M2 18 Q8 12 14 18" stroke="#50b040" fill="none" stroke-width="1.5"/><path d="M8 18 Q14 12 21 17" stroke="#3a80d0" fill="none" stroke-width="1.5"/></svg>
<svg class="a" style="left:1745.0px;top:68.5px" width="24" height="24" viewBox="0 0 24 24"><path d="M2 5 L22 3 L22 19 L2 21 Z" fill="#6a6a6a"/><path d="M6 5 Q8 12 6 20 M11 4.5 Q13 12 11 20 M16 4 Q18 12 16 19" stroke="#aaa" fill="none"/></svg><div class="a" style="left:36px;top:123px;width:1px;height:6px;background:#7c7c7c"></div>
<div class="a" style="left:36px;top:145px;width:1px;height:9px;background:#7c7c7c"></div>
<div class="a" style="left:36px;top:163px;width:1px;height:106px;background:#7c7c7c"></div>
<div class="a" style="left:37px;top:246px;width:9px;height:1px;background:#7c7c7c"></div>
<div class="a" style="left:37px;top:268px;width:9px;height:1px;background:#7c7c7c"></div>
<div class="a" style="left:41px;top:158px;width:5px;height:1px;background:#7c7c7c"></div>
<div class="a" style="left:54px;top:166px;width:1px;height:10px;background:#7c7c7c"></div>
<div class="a" style="left:54px;top:185px;width:1px;height:40px;background:#7c7c7c"></div>
<div class="a" style="left:55px;top:224px;width:9px;height:1px;background:#7c7c7c"></div>
<div class="a" style="left:59px;top:180px;width:5px;height:1px;background:#7c7c7c"></div>
<div class="a" style="left:72px;top:188px;width:1px;height:7px;background:#7c7c7c"></div>
<div class="a" style="left:32px;top:154px;width:9px;height:9px;border:1px solid #8a8a8a;background:#fff"></div>
<div class="a" style="left:34px;top:158px;width:5px;height:1.3px;background:#000"></div>
<div class="a" style="left:50px;top:176px;width:9px;height:9px;border:1px solid #8a8a8a;background:#fff"></div>
<div class="a" style="left:52px;top:180px;width:5px;height:1.3px;background:#000"></div>
<svg class="a" style="left:32px;top:129px" width="9" height="15" viewBox="0 0 9 15"><rect x="0.5" y="0.5" width="8" height="14" fill="#d8d8d8" stroke="#111"/><rect x="2" y="2" width="5" height="2" fill="#222"/><rect x="2" y="8" width="5" height="5" fill="#999"/><rect x="6" y="5" width="1" height="1" fill="#222"/></svg>
<svg class="a" style="left:46px;top:150px" width="17" height="17" viewBox="0 0 17 17"><path d="M1 3.5 L9 1 L16 3.5 L16 13.5 L8 16 L1 13.5 Z" fill="#78c45c" stroke="#6a6a5a" stroke-width="0.9"/><path d="M1 3.5 L8 6 L8 16 L1 13.5 Z" fill="#4e8a3c"/><path d="M1 3.5 L9 1 L16 3.5 L8 6 Z" fill="#8ed070"/><path d="M1 3.5 L8 6 L16 3.5 M8 6 V16" fill="none" stroke="#5a6a4a" stroke-width="0.8"/></svg>
<svg class="a" style="left:64px;top:194px" width="17" height="17" viewBox="0 0 17 17"><path d="M1 3.5 L9 1 L16 3.5 L16 13.5 L8 16 L1 13.5 Z" fill="#78c45c" stroke="#6a6a5a" stroke-width="0.9"/><path d="M1 3.5 L8 6 L8 16 L1 13.5 Z" fill="#4e8a3c"/><path d="M1 3.5 L9 1 L16 3.5 L8 6 Z" fill="#8ed070"/><path d="M1 3.5 L8 6 L16 3.5 M8 6 V16" fill="none" stroke="#5a6a4a" stroke-width="0.8"/></svg>
<svg class="a" style="left:64px;top:216px" width="17" height="17" viewBox="0 0 17 17"><path d="M1 3.5 L9 1 L16 3.5 L16 13.5 L8 16 L1 13.5 Z" fill="#78c45c" stroke="#6a6a5a" stroke-width="0.9"/><path d="M1 3.5 L8 6 L8 16 L1 13.5 Z" fill="#4e8a3c"/><path d="M1 3.5 L9 1 L16 3.5 L8 6 Z" fill="#8ed070"/><path d="M1 3.5 L8 6 L16 3.5 M8 6 V16" fill="none" stroke="#5a6a4a" stroke-width="0.8"/></svg>
<svg class="a" style="left:46px;top:238px" width="17" height="17" viewBox="0 0 17 17"><path d="M1 3.5 L9 1 L16 3.5 L16 13.5 L8 16 L1 13.5 Z" fill="#78c45c" stroke="#6a6a5a" stroke-width="0.9"/><path d="M1 3.5 L8 6 L8 16 L1 13.5 Z" fill="#4e8a3c"/><path d="M1 3.5 L9 1 L16 3.5 L8 6 Z" fill="#8ed070"/><path d="M1 3.5 L8 6 L16 3.5 M8 6 V16" fill="none" stroke="#5a6a4a" stroke-width="0.8"/></svg>
<svg class="a" style="left:46px;top:260px" width="17" height="17" viewBox="0 0 17 17"><path d="M1 3.5 L9 1 L16 3.5 L16 13.5 L8 16 L1 13.5 Z" fill="#78c45c" stroke="#6a6a5a" stroke-width="0.9"/><path d="M1 3.5 L8 6 L8 16 L1 13.5 Z" fill="#4e8a3c"/><path d="M1 3.5 L9 1 L16 3.5 L8 6 Z" fill="#8ed070"/><path d="M1 3.5 L8 6 L16 3.5 M8 6 V16" fill="none" stroke="#5a6a4a" stroke-width="0.8"/></svg>
<svg class="a" style="left:64px;top:172px" width="16" height="16" viewBox="0 0 16 16"><rect x="0.5" y="0.5" width="15" height="15" fill="#fafaf0" stroke="#7a7a60"/><path d="M3 0.5 V15.5 M0.5 4 H15.5 M0.5 7 H15.5 M0.5 10 H15.5 M0.5 13 H15.5" stroke="#b0b0a0" stroke-width="0.8"/></svg>
<svg class="a" style="left:6px;top:220px" width="14" height="9" viewBox="0 0 14 9"><ellipse cx="7" cy="4.5" rx="6.3" ry="3.6" fill="#fff" stroke="#a8a8a8" stroke-width="1.4"/><circle cx="7" cy="4.5" r="2.3" fill="#b8b8b8"/></svg>
<svg class="a" style="left:6px;top:242px" width="14" height="9" viewBox="0 0 14 9"><ellipse cx="7" cy="4.5" rx="6.3" ry="3.6" fill="#fff" stroke="#a8a8a8" stroke-width="1.4"/><circle cx="7" cy="4.5" r="2.3" fill="#b8b8b8"/></svg>
<svg class="a" style="left:6px;top:264px" width="14" height="9" viewBox="0 0 14 9"><ellipse cx="7" cy="4.5" rx="6.3" ry="3.6" fill="#fff" stroke="#111" stroke-width="1.4"/><circle cx="7" cy="4.5" r="2.3" fill="#1c3c8c"/></svg>
<svg class="a" style="left:462px;top:104px" width="12" height="12" viewBox="0 0 12 12"><rect x="4.5" y="1.5" width="6" height="5" fill="none" stroke="#000" stroke-width="1.3"/><rect x="1.5" y="5" width="6" height="5.5" fill="#fff" stroke="#000" stroke-width="1.3"/></svg>
<svg class="a" style="left:477px;top:104px" width="12" height="12" viewBox="0 0 12 12"><path d="M2 2 L10 10 M10 2 L2 10" stroke="#000" stroke-width="1.6"/></svg>
<svg class="a" style="left:462px;top:318px" width="12" height="12" viewBox="0 0 12 12"><rect x="4.5" y="1.5" width="6" height="5" fill="none" stroke="#000" stroke-width="1.3"/><rect x="1.5" y="5" width="6" height="5.5" fill="#fff" stroke="#000" stroke-width="1.3"/></svg>
<svg class="a" style="left:477px;top:318px" width="12" height="12" viewBox="0 0 12 12"><path d="M2 2 L10 10 M10 2 L2 10" stroke="#000" stroke-width="1.6"/></svg>
<svg class="a" style="left:40px;top:349px" width="16" height="16" viewBox="0 0 16 16"><path d="M2 6 L7 4 L11 6 L11 13 L7 15 L2 13 Z" fill="#e4e4e4" stroke="#bbb"/><path d="M7 8 L13 3 M10 2.5 h4 v4" stroke="#c8c8c8" stroke-width="1.6" fill="none"/></svg>
<svg class="a" style="left:159px;top:349px" width="16" height="16" viewBox="0 0 16 16"><circle cx="8" cy="8" r="7" fill="#c8c8c8"/><path d="M4 11 L11 4" stroke="#e8e8e8" stroke-width="1.8"/></svg>
<svg class="a" style="left:275px;top:349px" width="15" height="15" viewBox="0 0 15 15"><path d="M2.5 2.5 L12.5 12.5 M12.5 2.5 L2.5 12.5" stroke="#e85030" stroke-width="3.2"/></svg>
<svg class="a" style="left:416px;top:348px" width="14" height="18" viewBox="0 0 14 18"><text x="7" y="16" text-anchor="middle" font-family="Liberation Sans" font-weight="bold" font-size="17" fill="#2a90e0">?</text></svg>
<svg class="a" style="left:460px;top:383px" width="18" height="18" viewBox="0 0 18 18"><g transform="translate(9,9)"><circle r="5.5" fill="#c8c8cc" stroke="#888" stroke-width="0.8"/><rect x="-1.6" y="-8" width="3.2" height="4" fill="#c8c8cc" stroke="#888" stroke-width="0.6" transform="rotate(0)"/><rect x="-1.6" y="-8" width="3.2" height="4" fill="#c8c8cc" stroke="#888" stroke-width="0.6" transform="rotate(45)"/><rect x="-1.6" y="-8" width="3.2" height="4" fill="#c8c8cc" stroke="#888" stroke-width="0.6" transform="rotate(90)"/><rect x="-1.6" y="-8" width="3.2" height="4" fill="#c8c8cc" stroke="#888" stroke-width="0.6" transform="rotate(135)"/><rect x="-1.6" y="-8" width="3.2" height="4" fill="#c8c8cc" stroke="#888" stroke-width="0.6" transform="rotate(180)"/><rect x="-1.6" y="-8" width="3.2" height="4" fill="#c8c8cc" stroke="#888" stroke-width="0.6" transform="rotate(225)"/><rect x="-1.6" y="-8" width="3.2" height="4" fill="#c8c8cc" stroke="#888" stroke-width="0.6" transform="rotate(270)"/><rect x="-1.6" y="-8" width="3.2" height="4" fill="#c8c8cc" stroke="#888" stroke-width="0.6" transform="rotate(315)"/><circle r="5" fill="#d6d6da"/><circle r="2.2" fill="#f4f4f4" stroke="#888" stroke-width="0.8"/></g></svg>
<svg class="a" style="left:341px;top:406px" width="16" height="16" viewBox="0 0 16 16"><rect x="5" y="1" width="8" height="10" fill="#fff" stroke="#222" stroke-width="1.1"/><rect x="2" y="4" width="8" height="10" fill="#fff" stroke="#222" stroke-width="1.1"/></svg>
<svg class="a" style="left:375px;top:406px" width="16" height="16" viewBox="0 0 16 16"><rect x="2" y="2" width="9" height="11" fill="#aaa" stroke="#777"/><rect x="7" y="6" width="7" height="8" fill="#fff" stroke="#777"/></svg>
<svg class="a" style="left:409px;top:406px" width="16" height="16" viewBox="0 0 16 16"><path d="M13 6 A5.5 5.5 0 0 0 3 6 M3 10 A5.5 5.5 0 0 0 13 10" fill="none" stroke="#2a7ae0" stroke-width="2.6"/><path d="M14 2 V7 H9 Z M2 14 V9 H7 Z" fill="#2a7ae0"/></svg>
<svg class="a" style="left:443px;top:406px" width="16" height="16" viewBox="0 0 16 16"><rect x="1.5" y="1.5" width="13" height="13" fill="#2a5aa8"/><rect x="4" y="1.5" width="8" height="5" fill="#fff"/><rect x="4" y="9" width="8" height="5.5" fill="#444"/></svg>
<svg class="a" style="left:341px;top:1038px" width="16" height="16" viewBox="0 0 16 16"><rect x="5" y="1" width="8" height="10" fill="#fff" stroke="#222" stroke-width="1.1"/><rect x="2" y="4" width="8" height="10" fill="#fff" stroke="#222" stroke-width="1.1"/></svg>
<svg class="a" style="left:375px;top:1038px" width="16" height="16" viewBox="0 0 16 16"><rect x="2" y="2" width="9" height="11" fill="#aaa" stroke="#777"/><rect x="7" y="6" width="7" height="8" fill="#fff" stroke="#777"/></svg>
<svg class="a" style="left:409px;top:1038px" width="16" height="16" viewBox="0 0 16 16"><path d="M13 6 A5.5 5.5 0 0 0 3 6 M3 10 A5.5 5.5 0 0 0 13 10" fill="none" stroke="#c0c0c0" stroke-width="2.6"/><path d="M14 2 V7 H9 Z M2 14 V9 H7 Z" fill="#c0c0c0"/></svg>
<svg class="a" style="left:443px;top:1038px" width="16" height="16" viewBox="0 0 16 16"><rect x="1.5" y="1.5" width="13" height="13" fill="#bdbdbd"/><rect x="4" y="1.5" width="8" height="5" fill="#fff"/><rect x="4" y="9" width="8" height="5.5" fill="#444"/></svg>
<svg class="a" style="left:341px;top:1078px" width="16" height="16" viewBox="0 0 16 16"><rect x="5" y="1" width="8" height="10" fill="#fff" stroke="#222" stroke-width="1.1"/><rect x="2" y="4" width="8" height="10" fill="#fff" stroke="#222" stroke-width="1.1"/></svg>
<svg class="a" style="left:375px;top:1078px" width="16" height="16" viewBox="0 0 16 16"><rect x="2" y="2" width="9" height="11" fill="#aaa" stroke="#777"/><rect x="7" y="6" width="7" height="8" fill="#fff" stroke="#777"/></svg>
<svg class="a" style="left:409px;top:1078px" width="16" height="16" viewBox="0 0 16 16"><path d="M13 6 A5.5 5.5 0 0 0 3 6 M3 10 A5.5 5.5 0 0 0 13 10" fill="none" stroke="#2a7ae0" stroke-width="2.6"/><path d="M14 2 V7 H9 Z M2 14 V9 H7 Z" fill="#2a7ae0"/></svg>
<svg class="a" style="left:443px;top:1078px" width="16" height="16" viewBox="0 0 16 16"><rect x="1.5" y="1.5" width="13" height="13" fill="#2a5aa8"/><rect x="4" y="1.5" width="8" height="5" fill="#fff"/><rect x="4" y="9" width="8" height="5.5" fill="#444"/></svg>
<svg class="a" style="left:466px;top:410px" width="16" height="16" viewBox="0 0 16 16"><path d="M4 10 L8 6 L12 10 Z" fill="#000"/></svg>
<svg class="a" style="left:466px;top:1108px" width="16" height="16" viewBox="0 0 16 16"><path d="M4 10 L8 6 L12 10 Z" fill="#000"/></svg>
<svg class="a" style="left:466px;top:1123px" width="16" height="16" viewBox="0 0 16 16"><path d="M4 7 L12 7 L8 11 Z" fill="#000"/></svg>
<svg class="a" style="left:1850px;top:661px" width="16" height="16" viewBox="0 0 16 16"><path d="M4 10 L8 6 L12 10 Z" fill="#000"/></svg>
<svg class="a" style="left:1850px;top:1111px" width="16" height="16" viewBox="0 0 16 16"><path d="M4 10 L8 6 L12 10 Z" fill="#000"/></svg>
<svg class="a" style="left:1850px;top:1127px" width="16" height="16" viewBox="0 0 16 16"><path d="M4 7 L12 7 L8 11 Z" fill="#000"/></svg>
<svg class="a" style="left:1069px;top:123px" width="22" height="21" viewBox="0 0 22 21"><rect x="5.5" y="4.5" width="11" height="10" fill="#dde6ff" stroke="#000" stroke-width="1.4"/><path d="M11 4.5 V14.5" stroke="#000" stroke-width="1.4"/></svg>
<svg class="a" style="left:1092px;top:123px" width="22" height="21" viewBox="0 0 22 21"><rect x="5.5" y="4.5" width="11" height="10" fill="#dde6ff" stroke="#000" stroke-width="1.4"/><path d="M5.5 9.5 H16.5" stroke="#000" stroke-width="1.4"/></svg>
<svg class="a" style="left:1115px;top:123px" width="22" height="21" viewBox="0 0 22 21"><rect x="5.5" y="4.5" width="11" height="10" fill="none" stroke="#000" stroke-width="1.4"/><path d="M5.5 5.5 H16.5" stroke="#000" stroke-width="1.5"/></svg>
<svg class="a" style="left:1138px;top:123px" width="22" height="21" viewBox="0 0 22 21"><rect x="8.5" y="4.5" width="7" height="5.5" fill="none" stroke="#000" stroke-width="1.4"/><rect x="5.5" y="8" width="7" height="6" fill="#fff" stroke="#000" stroke-width="1.4"/></svg>
<svg class="a" style="left:1161px;top:123px" width="22" height="21" viewBox="0 0 22 21"><path d="M6.5 5.5 L15.5 14.5 M15.5 5.5 L6.5 14.5" stroke="#000" stroke-width="1.6"/></svg>
<svg class="a" style="left:1755px;top:123px" width="22" height="21" viewBox="0 0 22 21"><rect x="5.5" y="4.5" width="11" height="10" fill="#dde6ff" stroke="#000" stroke-width="1.4"/><path d="M11 4.5 V14.5" stroke="#000" stroke-width="1.4"/></svg>
<svg class="a" style="left:1778px;top:123px" width="22" height="21" viewBox="0 0 22 21"><rect x="5.5" y="4.5" width="11" height="10" fill="#dde6ff" stroke="#000" stroke-width="1.4"/><path d="M5.5 9.5 H16.5" stroke="#000" stroke-width="1.4"/></svg>
<svg class="a" style="left:1801px;top:123px" width="22" height="21" viewBox="0 0 22 21"><rect x="5.5" y="4.5" width="11" height="10" fill="none" stroke="#000" stroke-width="1.4"/><path d="M5.5 5.5 H16.5" stroke="#000" stroke-width="1.5"/></svg>
<svg class="a" style="left:1824px;top:123px" width="22" height="21" viewBox="0 0 22 21"><rect x="8.5" y="4.5" width="7" height="5.5" fill="none" stroke="#000" stroke-width="1.4"/><rect x="5.5" y="8" width="7" height="6" fill="#fff" stroke="#000" stroke-width="1.4"/></svg>
<svg class="a" style="left:1847px;top:123px" width="22" height="21" viewBox="0 0 22 21"><path d="M6.5 5.5 L15.5 14.5 M15.5 5.5 L6.5 14.5" stroke="#000" stroke-width="1.6"/></svg>
<svg class="a" style="left:1069px;top:636px" width="22" height="21" viewBox="0 0 22 21"><rect x="5.5" y="4.5" width="11" height="10" fill="#dde6ff" stroke="#000" stroke-width="1.4"/><path d="M11 4.5 V14.5" stroke="#000" stroke-width="1.4"/></svg>
<svg class="a" style="left:1092px;top:636px" width="22" height="21" viewBox="0 0 22 21"><rect x="5.5" y="4.5" width="11" height="10" fill="#dde6ff" stroke="#000" stroke-width="1.4"/><path d="M5.5 9.5 H16.5" stroke="#000" stroke-width="1.4"/></svg>
<svg class="a" style="left:1115px;top:636px" width="22" height="21" viewBox="0 0 22 21"><rect x="5.5" y="4.5" width="11" height="10" fill="none" stroke="#000" stroke-width="1.4"/><path d="M5.5 5.5 H16.5" stroke="#000" stroke-width="1.5"/></svg>
<svg class="a" style="left:1138px;top:636px" width="22" height="21" viewBox="0 0 22 21"><rect x="8.5" y="4.5" width="7" height="5.5" fill="none" stroke="#000" stroke-width="1.4"/><rect x="5.5" y="8" width="7" height="6" fill="#fff" stroke="#000" stroke-width="1.4"/></svg>
<svg class="a" style="left:1161px;top:636px" width="22" height="21" viewBox="0 0 22 21"><path d="M6.5 5.5 L15.5 14.5 M15.5 5.5 L6.5 14.5" stroke="#000" stroke-width="1.6"/></svg>
<svg class="a" style="left:1755px;top:636px" width="22" height="21" viewBox="0 0 22 21"><rect x="5.5" y="4.5" width="11" height="10" fill="#dde6ff" stroke="#000" stroke-width="1.4"/><path d="M11 4.5 V14.5" stroke="#000" stroke-width="1.4"/></svg>
<svg class="a" style="left:1778px;top:636px" width="22" height="21" viewBox="0 0 22 21"><rect x="5.5" y="4.5" width="11" height="10" fill="#dde6ff" stroke="#000" stroke-width="1.4"/><path d="M5.5 9.5 H16.5" stroke="#000" stroke-width="1.4"/></svg>
<svg class="a" style="left:1801px;top:636px" width="22" height="21" viewBox="0 0 22 21"><rect x="5.5" y="4.5" width="11" height="10" fill="none" stroke="#000" stroke-width="1.4"/><path d="M5.5 5.5 H16.5" stroke="#000" stroke-width="1.5"/></svg>
<svg class="a" style="left:1824px;top:636px" width="22" height="21" viewBox="0 0 22 21"><rect x="8.5" y="4.5" width="7" height="5.5" fill="none" stroke="#000" stroke-width="1.4"/><rect x="5.5" y="8" width="7" height="6" fill="#fff" stroke="#000" stroke-width="1.4"/></svg>
<svg class="a" style="left:1847px;top:636px" width="22" height="21" viewBox="0 0 22 21"><path d="M6.5 5.5 L15.5 14.5 M15.5 5.5 L6.5 14.5" stroke="#000" stroke-width="1.6"/></svg>
<svg class="a" style="left:503px;top:126px" width="14" height="14" viewBox="0 0 18 18"><rect x="6" y="2" width="10" height="9" fill="#ddd" stroke="#888"/><circle cx="11" cy="6.5" r="2.5" fill="none" stroke="#777"/><path d="M3 12 A4 4 0 1 1 9 15" fill="none" stroke="#e05030" stroke-width="2"/><path d="M1 10 L5 10 L3 14 Z" fill="#e05030"/></svg>
<svg class="a" style="left:525px;top:126px" width="14" height="14" viewBox="0 0 18 18"><rect x="4" y="2" width="9" height="8" fill="#eee" stroke="#bbb"/><rect x="7" y="6" width="9" height="8" fill="#eee" stroke="#bbb"/><path d="M5 14 A3 3 0 0 0 11 15" fill="none" stroke="#ccc" stroke-width="1.5"/></svg>
<div class="a" style="left:543px;top:123px;width:1px;height:19px;background:#b8b8b8"></div>
<div class="a" style="left:550px;top:127px;font-size:9.5px;line-height:12px;color:#333;letter-spacing:0.3px">3D</div>
<svg class="a" style="left:571px;top:126px" width="14" height="14" viewBox="0 0 18 18"><rect x="2" y="3" width="12" height="11" rx="1" fill="#ddd" stroke="#7a7a6a"/><circle cx="8" cy="8.5" r="3" fill="none" stroke="#7a7a6a"/><circle cx="13" cy="13" r="4" fill="#5cc040"/><circle cx="13" cy="13" r="2" fill="#e8ffe0"/></svg>
<div class="a" style="left:590px;top:123px;width:1px;height:19px;background:#b8b8b8"></div>
<svg class="a" style="left:595px;top:126px" width="14" height="14" viewBox="0 0 18 18"><rect x="2" y="3" width="11" height="11" fill="none" stroke="#555" stroke-dasharray="1.3,1.3"/><path d="M5 6 H11 M8 3 V9" stroke="#2a9a2a" stroke-width="2"/><path d="M9 9 L16 15 L13.5 15.5 L14.5 17.5 L13 17.8 L12 16 L10 17 Z" fill="#6a6a5a"/></svg>
<svg class="a" style="left:617px;top:126px" width="14" height="14" viewBox="0 0 18 18"><rect x="2" y="3" width="11" height="11" fill="none" stroke="#555" stroke-dasharray="1.3,1.3"/><path d="M5 6 H11" stroke="#e03020" stroke-width="2"/><path d="M9 9 L16 15 L13.5 15.5 L14.5 17.5 L13 17.8 L12 16 L10 17 Z" fill="#6a6a5a"/></svg>
<svg class="a" style="left:639px;top:126px" width="14" height="14" viewBox="0 0 18 18"><rect x="2" y="3" width="11" height="11" fill="none" stroke="#555" stroke-dasharray="1.3,1.3"/><path d="M5 4 H11 M8 1.5 V6.5" stroke="#2a9a2a" stroke-width="1.6"/><path d="M5 9 H11" stroke="#e03020" stroke-width="1.6"/><path d="M9 9 L16 15 L13.5 15.5 L14.5 17.5 L13 17.8 L12 16 L10 17 Z" fill="#6a6a5a"/></svg>
<div class="a" style="left:657px;top:123px;width:1px;height:19px;background:#b8b8b8"></div>
<svg class="a" style="left:663px;top:126px" width="14" height="14" viewBox="0 0 18 18"><rect x="2" y="3" width="11" height="11" fill="none" stroke="#555" stroke-dasharray="1.3,1.3"/><path d="M4 12 L8 5 L12 12 Z" fill="#7ac860"/><path d="M9 9 L16 15 L13.5 15.5 L14.5 17.5 L13 17.8 L12 16 L10 17 Z" fill="#6a6a5a"/></svg>
<svg class="a" style="left:685px;top:126px" width="14" height="14" viewBox="0 0 18 18"><rect x="2" y="3" width="11" height="11" fill="none" stroke="#555" stroke-dasharray="1.3,1.3"/><circle cx="8" cy="4" r="1" fill="#e03020"/><circle cx="3" cy="12" r="1" fill="#e03020"/><path d="M8 4 L3 12" stroke="#9ac080" stroke-dasharray="1,1"/><path d="M9 9 L16 15 L13.5 15.5 L14.5 17.5 L13 17.8 L12 16 L10 17 Z" fill="#6a6a5a"/></svg>
<svg class="a" style="left:707px;top:126px" width="14" height="14" viewBox="0 0 18 18"><path d="M2 3 L9 5 L16 3 V13 L9 15 L2 13 Z" fill="#7ac860" stroke="#888" stroke-width="0.6"/><path d="M9 9 L15 15 L12.5 15.5 L13.5 17.5 L12 17.8 L11 16 L9 17 Z" fill="#5a5a4a"/></svg>
<svg class="a" style="left:729px;top:126px" width="14" height="14" viewBox="0 0 18 18"><path d="M2 3 L9 5 L16 3 V13 L9 15 L2 13 Z" fill="none" stroke="#888" stroke-dasharray="1,1"/><circle cx="5" cy="7" r="1" fill="#e03020"/><circle cx="5" cy="11" r="1" fill="#e03020"/><circle cx="14" cy="5" r="1.2" fill="#e03020"/><circle cx="14" cy="12" r="1.2" fill="#e03020"/><path d="M9 9 L15 15 L12.5 15.5 L13.5 17.5 L12 17.8 L11 16 L9 17 Z" fill="#5a5a4a"/></svg>
<svg class="a" style="left:751px;top:126px" width="14" height="14" viewBox="0 0 18 18"><path d="M2 3 L8 6 L15 2 L11 9 L16 14 L8 12 L2 15 Z" fill="none" stroke="#2a5a2a" stroke-dasharray="1.2,1"/><circle cx="8" cy="9" r="2.5" fill="#7ac860"/></svg>
<svg class="a" style="left:773px;top:126px" width="14" height="14" viewBox="0 0 18 18"><path d="M2 3 L8 6 L15 2 L11 9 L16 14 L8 12 L2 15 Z" fill="none" stroke="#2a5a2a" stroke-dasharray="1.2,1"/><circle cx="5" cy="7" r="1" fill="#e03020"/><circle cx="13" cy="5" r="1" fill="#e03020"/><circle cx="12" cy="12" r="1" fill="#e03020"/></svg>
<svg class="a" style="left:795px;top:126px" width="14" height="14" viewBox="0 0 18 18"><rect x="2" y="4" width="12" height="10" fill="none" stroke="#aaa" stroke-dasharray="1.2,1"/><circle cx="11" cy="10" r="2.5" fill="#9ac080"/><rect x="3" y="5" width="4" height="3" fill="#b8c8d8"/></svg>
<svg class="a" style="left:817px;top:126px" width="14" height="14" viewBox="0 0 18 18"><path d="M2 12 L7 4 L12 12 Z" fill="#7ac860"/><path d="M9 9 L15 15 L12.5 15.5 L13.5 17.5 L12 17.8 L11 16 L9 17 Z" fill="#5a5a4a"/></svg>
<svg class="a" style="left:839px;top:126px" width="14" height="14" viewBox="0 0 18 18"><circle cx="7" cy="3" r="1.2" fill="#e03020"/><circle cx="2" cy="12" r="1.2" fill="#e03020"/><path d="M7 3 L2 12" stroke="#b8d8a8" stroke-dasharray="1,1"/><path d="M9 9 L15 15 L12.5 15.5 L13.5 17.5 L12 17.8 L11 16 L9 17 Z" fill="#5a5a4a"/></svg>
<svg class="a" style="left:861px;top:126px" width="14" height="14" viewBox="0 0 18 18"><circle cx="3" cy="11" r="1.2" fill="#e03020"/><text x="11" y="15" text-anchor="middle" font-family="Liberation Sans" font-weight="bold" font-size="14" fill="#555">?</text></svg>
<svg class="a" style="left:883px;top:126px" width="14" height="14" viewBox="0 0 18 18"><path d="M4 4 Q9 1 14 4 L13 16 Q9 18 5 16 Z" fill="#8a8a8a"/><ellipse cx="9" cy="4" rx="5" ry="1.6" fill="#bbb"/></svg>
<svg class="a" style="left:1190px;top:126px" width="14" height="14" viewBox="0 0 18 18"><rect x="6" y="2" width="10" height="9" fill="#ddd" stroke="#888"/><circle cx="11" cy="6.5" r="2.5" fill="none" stroke="#777"/><path d="M3 12 A4 4 0 1 1 9 15" fill="none" stroke="#e05030" stroke-width="2"/><path d="M1 10 L5 10 L3 14 Z" fill="#e05030"/></svg>
<svg class="a" style="left:1212px;top:126px" width="14" height="14" viewBox="0 0 18 18"><rect x="4" y="2" width="9" height="8" fill="#eee" stroke="#bbb"/><rect x="7" y="6" width="9" height="8" fill="#eee" stroke="#bbb"/><path d="M5 14 A3 3 0 0 0 11 15" fill="none" stroke="#ccc" stroke-width="1.5"/></svg>
<div class="a" style="left:1230px;top:123px;width:1px;height:19px;background:#b8b8b8"></div>
<div class="a" style="left:1237px;top:127px;font-size:9.5px;line-height:12px;color:#333;letter-spacing:0.3px">3D</div>
<svg class="a" style="left:1258px;top:126px" width="14" height="14" viewBox="0 0 18 18"><rect x="2" y="3" width="12" height="11" rx="1" fill="#ddd" stroke="#7a7a6a"/><circle cx="8" cy="8.5" r="3" fill="none" stroke="#7a7a6a"/><circle cx="13" cy="13" r="4" fill="#5cc040"/><circle cx="13" cy="13" r="2" fill="#e8ffe0"/></svg>
<div class="a" style="left:1277px;top:123px;width:1px;height:19px;background:#b8b8b8"></div>
<svg class="a" style="left:1282px;top:126px" width="14" height="14" viewBox="0 0 18 18"><rect x="2" y="3" width="11" height="11" fill="none" stroke="#555" stroke-dasharray="1.3,1.3"/><path d="M5 6 H11 M8 3 V9" stroke="#2a9a2a" stroke-width="2"/><path d="M9 9 L16 15 L13.5 15.5 L14.5 17.5 L13 17.8 L12 16 L10 17 Z" fill="#6a6a5a"/></svg>
<svg class="a" style="left:1304px;top:126px" width="14" height="14" viewBox="0 0 18 18"><rect x="2" y="3" width="11" height="11" fill="none" stroke="#555" stroke-dasharray="1.3,1.3"/><path d="M5 6 H11" stroke="#e03020" stroke-width="2"/><path d="M9 9 L16 15 L13.5 15.5 L14.5 17.5 L13 17.8 L12 16 L10 17 Z" fill="#6a6a5a"/></svg>
<svg class="a" style="left:1326px;top:126px" width="14" height="14" viewBox="0 0 18 18"><rect x="2" y="3" width="11" height="11" fill="none" stroke="#555" stroke-dasharray="1.3,1.3"/><path d="M5 4 H11 M8 1.5 V6.5" stroke="#2a9a2a" stroke-width="1.6"/><path d="M5 9 H11" stroke="#e03020" stroke-width="1.6"/><path d="M9 9 L16 15 L13.5 15.5 L14.5 17.5 L13 17.8 L12 16 L10 17 Z" fill="#6a6a5a"/></svg>
<div class="a" style="left:1344px;top:123px;width:1px;height:19px;background:#b8b8b8"></div>
<svg class="a" style="left:1350px;top:126px" width="14" height="14" viewBox="0 0 18 18"><rect x="2" y="3" width="11" height="11" fill="none" stroke="#555" stroke-dasharray="1.3,1.3"/><path d="M4 12 L8 5 L12 12 Z" fill="#7ac860"/><path d="M9 9 L16 15 L13.5 15.5 L14.5 17.5 L13 17.8 L12 16 L10 17 Z" fill="#6a6a5a"/></svg>
<svg class="a" style="left:1372px;top:126px" width="14" height="14" viewBox="0 0 18 18"><rect x="2" y="3" width="11" height="11" fill="none" stroke="#555" stroke-dasharray="1.3,1.3"/><circle cx="8" cy="4" r="1" fill="#e03020"/><circle cx="3" cy="12" r="1" fill="#e03020"/><path d="M8 4 L3 12" stroke="#9ac080" stroke-dasharray="1,1"/><path d="M9 9 L16 15 L13.5 15.5 L14.5 17.5 L13 17.8 L12 16 L10 17 Z" fill="#6a6a5a"/></svg>
<svg class="a" style="left:1394px;top:126px" width="14" height="14" viewBox="0 0 18 18"><path d="M2 3 L9 5 L16 3 V13 L9 15 L2 13 Z" fill="#7ac860" stroke="#888" stroke-width="0.6"/><path d="M9 9 L15 15 L12.5 15.5 L13.5 17.5 L12 17.8 L11 16 L9 17 Z" fill="#5a5a4a"/></svg>
<svg class="a" style="left:1416px;top:126px" width="14" height="14" viewBox="0 0 18 18"><path d="M2 3 L9 5 L16 3 V13 L9 15 L2 13 Z" fill="none" stroke="#888" stroke-dasharray="1,1"/><circle cx="5" cy="7" r="1" fill="#e03020"/><circle cx="5" cy="11" r="1" fill="#e03020"/><circle cx="14" cy="5" r="1.2" fill="#e03020"/><circle cx="14" cy="12" r="1.2" fill="#e03020"/><path d="M9 9 L15 15 L12.5 15.5 L13.5 17.5 L12 17.8 L11 16 L9 17 Z" fill="#5a5a4a"/></svg>
<svg class="a" style="left:1438px;top:126px" width="14" height="14" viewBox="0 0 18 18"><path d="M2 3 L8 6 L15 2 L11 9 L16 14 L8 12 L2 15 Z" fill="none" stroke="#2a5a2a" stroke-dasharray="1.2,1"/><circle cx="8" cy="9" r="2.5" fill="#7ac860"/></svg>
<svg class="a" style="left:1460px;top:126px" width="14" height="14" viewBox="0 0 18 18"><path d="M2 3 L8 6 L15 2 L11 9 L16 14 L8 12 L2 15 Z" fill="none" stroke="#2a5a2a" stroke-dasharray="1.2,1"/><circle cx="5" cy="7" r="1" fill="#e03020"/><circle cx="13" cy="5" r="1" fill="#e03020"/><circle cx="12" cy="12" r="1" fill="#e03020"/></svg>
<svg class="a" style="left:1482px;top:126px" width="14" height="14" viewBox="0 0 18 18"><rect x="2" y="4" width="12" height="10" fill="none" stroke="#aaa" stroke-dasharray="1.2,1"/><circle cx="11" cy="10" r="2.5" fill="#9ac080"/><rect x="3" y="5" width="4" height="3" fill="#b8c8d8"/></svg>
<svg class="a" style="left:1504px;top:126px" width="14" height="14" viewBox="0 0 18 18"><path d="M2 12 L7 4 L12 12 Z" fill="#7ac860"/><path d="M9 9 L15 15 L12.5 15.5 L13.5 17.5 L12 17.8 L11 16 L9 17 Z" fill="#5a5a4a"/></svg>
<svg class="a" style="left:1526px;top:126px" width="14" height="14" viewBox="0 0 18 18"><circle cx="7" cy="3" r="1.2" fill="#e03020"/><circle cx="2" cy="12" r="1.2" fill="#e03020"/><path d="M7 3 L2 12" stroke="#b8d8a8" stroke-dasharray="1,1"/><path d="M9 9 L15 15 L12.5 15.5 L13.5 17.5 L12 17.8 L11 16 L9 17 Z" fill="#5a5a4a"/></svg>
<svg class="a" style="left:1548px;top:126px" width="14" height="14" viewBox="0 0 18 18"><circle cx="3" cy="11" r="1.2" fill="#e03020"/><text x="11" y="15" text-anchor="middle" font-family="Liberation Sans" font-weight="bold" font-size="14" fill="#555">?</text></svg>
<svg class="a" style="left:1570px;top:126px" width="14" height="14" viewBox="0 0 18 18"><path d="M4 4 Q9 1 14 4 L13 16 Q9 18 5 16 Z" fill="#8a8a8a"/><ellipse cx="9" cy="4" rx="5" ry="1.6" fill="#bbb"/></svg>
<svg class="a" style="left:503px;top:638px" width="14" height="14" viewBox="0 0 18 18"><rect x="6" y="2" width="10" height="9" fill="#ddd" stroke="#888"/><circle cx="11" cy="6.5" r="2.5" fill="none" stroke="#777"/><path d="M3 12 A4 4 0 1 1 9 15" fill="none" stroke="#e05030" stroke-width="2"/><path d="M1 10 L5 10 L3 14 Z" fill="#e05030"/></svg>
<svg class="a" style="left:525px;top:638px" width="14" height="14" viewBox="0 0 18 18"><rect x="4" y="2" width="9" height="8" fill="#eee" stroke="#bbb"/><rect x="7" y="6" width="9" height="8" fill="#eee" stroke="#bbb"/><path d="M5 14 A3 3 0 0 0 11 15" fill="none" stroke="#ccc" stroke-width="1.5"/></svg>
<div class="a" style="left:543px;top:635px;width:1px;height:19px;background:#b8b8b8"></div>
<div class="a" style="left:550px;top:639px;font-size:9.5px;line-height:12px;color:#333;letter-spacing:0.3px">3D</div>
<svg class="a" style="left:571px;top:638px" width="14" height="14" viewBox="0 0 18 18"><rect x="2" y="3" width="12" height="11" rx="1" fill="#ddd" stroke="#7a7a6a"/><circle cx="8" cy="8.5" r="3" fill="none" stroke="#7a7a6a"/><circle cx="13" cy="13" r="4" fill="#5cc040"/><circle cx="13" cy="13" r="2" fill="#e8ffe0"/></svg>
<div class="a" style="left:590px;top:635px;width:1px;height:19px;background:#b8b8b8"></div>
<svg class="a" style="left:595px;top:638px" width="14" height="14" viewBox="0 0 18 18"><rect x="2" y="3" width="11" height="11" fill="none" stroke="#555" stroke-dasharray="1.3,1.3"/><path d="M5 6 H11 M8 3 V9" stroke="#2a9a2a" stroke-width="2"/><path d="M9 9 L16 15 L13.5 15.5 L14.5 17.5 L13 17.8 L12 16 L10 17 Z" fill="#6a6a5a"/></svg>
<svg class="a" style="left:617px;top:638px" width="14" height="14" viewBox="0 0 18 18"><rect x="2" y="3" width="11" height="11" fill="none" stroke="#555" stroke-dasharray="1.3,1.3"/><path d="M5 6 H11" stroke="#e03020" stroke-width="2"/><path d="M9 9 L16 15 L13.5 15.5 L14.5 17.5 L13 17.8 L12 16 L10 17 Z" fill="#6a6a5a"/></svg>
<svg class="a" style="left:639px;top:638px" width="14" height="14" viewBox="0 0 18 18"><rect x="2" y="3" width="11" height="11" fill="none" stroke="#555" stroke-dasharray="1.3,1.3"/><path d="M5 4 H11 M8 1.5 V6.5" stroke="#2a9a2a" stroke-width="1.6"/><path d="M5 9 H11" stroke="#e03020" stroke-width="1.6"/><path d="M9 9 L16 15 L13.5 15.5 L14.5 17.5 L13 17.8 L12 16 L10 17 Z" fill="#6a6a5a"/></svg>
<div class="a" style="left:657px;top:635px;width:1px;height:19px;background:#b8b8b8"></div>
<svg class="a" style="left:663px;top:638px" width="14" height="14" viewBox="0 0 18 18"><rect x="2" y="3" width="11" height="11" fill="none" stroke="#555" stroke-dasharray="1.3,1.3"/><path d="M4 12 L8 5 L12 12 Z" fill="#7ac860"/><path d="M9 9 L16 15 L13.5 15.5 L14.5 17.5 L13 17.8 L12 16 L10 17 Z" fill="#6a6a5a"/></svg>
<svg class="a" style="left:685px;top:638px" width="14" height="14" viewBox="0 0 18 18"><rect x="2" y="3" width="11" height="11" fill="none" stroke="#555" stroke-dasharray="1.3,1.3"/><circle cx="8" cy="4" r="1" fill="#e03020"/><circle cx="3" cy="12" r="1" fill="#e03020"/><path d="M8 4 L3 12" stroke="#9ac080" stroke-dasharray="1,1"/><path d="M9 9 L16 15 L13.5 15.5 L14.5 17.5 L13 17.8 L12 16 L10 17 Z" fill="#6a6a5a"/></svg>
<svg class="a" style="left:707px;top:638px" width="14" height="14" viewBox="0 0 18 18"><path d="M2 3 L9 5 L16 3 V13 L9 15 L2 13 Z" fill="#7ac860" stroke="#888" stroke-width="0.6"/><path d="M9 9 L15 15 L12.5 15.5 L13.5 17.5 L12 17.8 L11 16 L9 17 Z" fill="#5a5a4a"/></svg>
<svg class="a" style="left:729px;top:638px" width="14" height="14" viewBox="0 0 18 18"><path d="M2 3 L9 5 L16 3 V13 L9 15 L2 13 Z" fill="none" stroke="#888" stroke-dasharray="1,1"/><circle cx="5" cy="7" r="1" fill="#e03020"/><circle cx="5" cy="11" r="1" fill="#e03020"/><circle cx="14" cy="5" r="1.2" fill="#e03020"/><circle cx="14" cy="12" r="1.2" fill="#e03020"/><path d="M9 9 L15 15 L12.5 15.5 L13.5 17.5 L12 17.8 L11 16 L9 17 Z" fill="#5a5a4a"/></svg>
<svg class="a" style="left:751px;top:638px" width="14" height="14" viewBox="0 0 18 18"><path d="M2 3 L8 6 L15 2 L11 9 L16 14 L8 12 L2 15 Z" fill="none" stroke="#2a5a2a" stroke-dasharray="1.2,1"/><circle cx="8" cy="9" r="2.5" fill="#7ac860"/></svg>
<svg class="a" style="left:773px;top:638px" width="14" height="14" viewBox="0 0 18 18"><path d="M2 3 L8 6 L15 2 L11 9 L16 14 L8 12 L2 15 Z" fill="none" stroke="#2a5a2a" stroke-dasharray="1.2,1"/><circle cx="5" cy="7" r="1" fill="#e03020"/><circle cx="13" cy="5" r="1" fill="#e03020"/><circle cx="12" cy="12" r="1" fill="#e03020"/></svg>
<svg class="a" style="left:795px;top:638px" width="14" height="14" viewBox="0 0 18 18"><rect x="2" y="4" width="12" height="10" fill="none" stroke="#aaa" stroke-dasharray="1.2,1"/><circle cx="11" cy="10" r="2.5" fill="#9ac080"/><rect x="3" y="5" width="4" height="3" fill="#b8c8d8"/></svg>
<svg class="a" style="left:817px;top:638px" width="14" height="14" viewBox="0 0 18 18"><path d="M2 12 L7 4 L12 12 Z" fill="#7ac860"/><path d="M9 9 L15 15 L12.5 15.5 L13.5 17.5 L12 17.8 L11 16 L9 17 Z" fill="#5a5a4a"/></svg>
<svg class="a" style="left:839px;top:638px" width="14" height="14" viewBox="0 0 18 18"><circle cx="7" cy="3" r="1.2" fill="#e03020"/><circle cx="2" cy="12" r="1.2" fill="#e03020"/><path d="M7 3 L2 12" stroke="#b8d8a8" stroke-dasharray="1,1"/><path d="M9 9 L15 15 L12.5 15.5 L13.5 17.5 L12 17.8 L11 16 L9 17 Z" fill="#5a5a4a"/></svg>
<svg class="a" style="left:861px;top:638px" width="14" height="14" viewBox="0 0 18 18"><circle cx="3" cy="11" r="1.2" fill="#e03020"/><text x="11" y="15" text-anchor="middle" font-family="Liberation Sans" font-weight="bold" font-size="14" fill="#555">?</text></svg>
<svg class="a" style="left:883px;top:638px" width="14" height="14" viewBox="0 0 18 18"><path d="M4 4 Q9 1 14 4 L13 16 Q9 18 5 16 Z" fill="#8a8a8a"/><ellipse cx="9" cy="4" rx="5" ry="1.6" fill="#bbb"/></svg>
<div class="a" style="left:726px;top:633px;width:223px;height:3px;background-image:radial-gradient(circle at 1px 1px,#b8b8b8 0.8px,transparent 1px);background-size:5px 3px"></div>
<div class="a" style="left:1412px;top:633px;width:224px;height:3px;background-image:radial-gradient(circle at 1px 1px,#b8b8b8 0.8px,transparent 1px);background-size:5px 3px"></div>
<div class="a" style="left:1183px;top:463px;width:3px;height:337px;background-image:radial-gradient(circle at 1px 1px,#b8b8b8 0.8px,transparent 1px);background-size:3px 5px"></div>
</body></html>
